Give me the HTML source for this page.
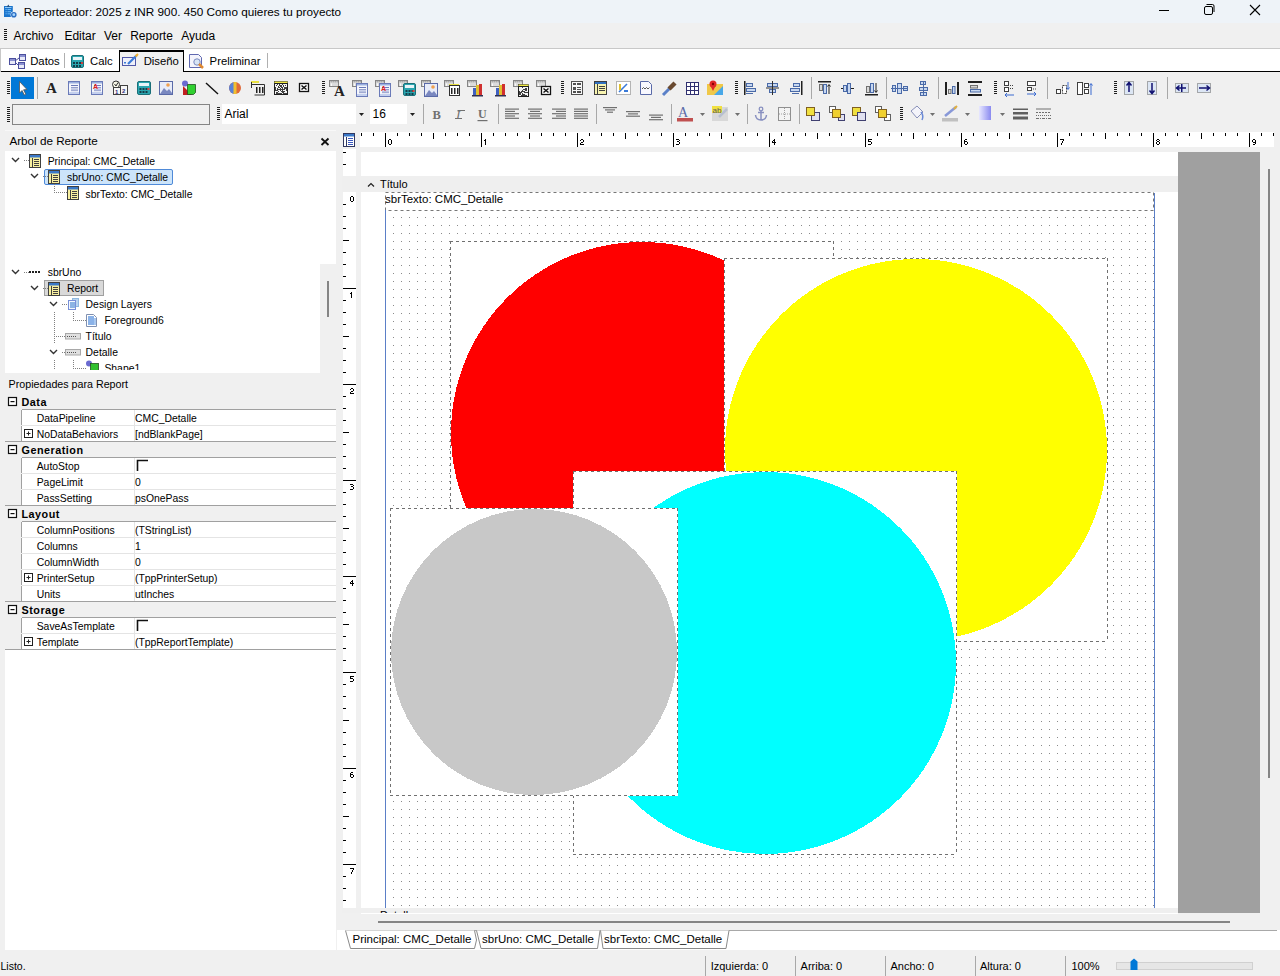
<!DOCTYPE html>
<html><head><meta charset="utf-8"><style>
*{box-sizing:border-box}
html,body{margin:0;padding:0}
body{width:1280px;height:976px;overflow:hidden;position:relative;background:#f0f0f0;font-family:"Liberation Sans",sans-serif;color:#000}
.a{position:absolute}
.t{position:absolute;white-space:nowrap;line-height:1}
svg{position:absolute;overflow:visible}
</style></head><body>

<div class="a" style="left:0px;top:0px;width:1280px;height:23px;background:#eef3f8"></div>
<div class="t" style="left:23.7px;top:5.55px;font-size:11.75px;">Reporteador: 2025 z INR 900. 450 Como quieres tu proyecto</div>
<svg style="left:0;top:0" width="1280" height="23"><line x1="1159" y1="10.5" x2="1169" y2="10.5" stroke="#000" stroke-width="1"/><rect x="1204.5" y="6.5" width="8" height="8" rx="1.5" fill="none" stroke="#000"/><path d="M1206.5 4.5 h6 a1.5 1.5 0 0 1 1.5 1.5 v6" fill="none" stroke="#000"/><path d="M1250 5 L1260 15 M1260 5 L1250 15" stroke="#000" stroke-width="1.1"/><rect x="4" y="6" width="8.8" height="11" fill="#1a74cc"/><path d="M6.8 7 L8.3 4.6 L9.8 7 Z" fill="#24507e"/><rect x="5" y="7" width="6.5" height="1" fill="#8cc8f8"/><rect x="5.5" y="9" width="1.2" height="1" fill="#6ab8f8"/><rect x="7.5" y="9" width="3.5" height="1" fill="#6ab8f8"/><rect x="5.5" y="11.2" width="1.2" height="1" fill="#6ab8f8"/><rect x="7.5" y="11.2" width="3.5" height="1" fill="#6ab8f8"/><rect x="5.5" y="13.3" width="1.2" height="1" fill="#6ab8f8"/><rect x="7.5" y="13.3" width="2.5" height="1" fill="#6ab8f8"/><circle cx="13.8" cy="14.7" r="3.3" fill="#eef3f8"/><circle cx="13.8" cy="14.7" r="2.1" fill="#a8d8ff" stroke="#2a6ec4" stroke-width="1.4"/></svg>
<svg style="left:0;top:0" width="1" height="1"><rect x="4" y="29" width="3" height="1" fill="#1a1a1a"/><rect x="4" y="31" width="3" height="1" fill="#1a1a1a"/><rect x="4" y="33" width="3" height="1" fill="#1a1a1a"/><rect x="4" y="35" width="3" height="1" fill="#1a1a1a"/><rect x="4" y="37" width="3" height="1" fill="#1a1a1a"/><rect x="4" y="39" width="3" height="1" fill="#1a1a1a"/></svg>
<div class="t" style="left:13.4px;top:30.34px;font-size:12px;">Archivo</div>
<div class="t" style="left:64.4px;top:30.34px;font-size:12px;">Editar</div>
<div class="t" style="left:104px;top:30.34px;font-size:12px;">Ver</div>
<div class="t" style="left:130.2px;top:30.34px;font-size:12px;">Reporte</div>
<div class="t" style="left:181.3px;top:30.34px;font-size:12px;">Ayuda</div>
<div class="a" style="left:0px;top:48px;width:1280px;height:1px;background:#c8c8c8"></div>
<div class="a" style="left:0px;top:49px;width:1280px;height:22px;background:#fff"></div>
<div class="a" style="left:0px;top:71px;width:1280px;height:1px;background:#000"></div>
<div class="a" style="left:0px;top:48px;width:1px;height:24px;background:#c8c8c8"></div>
<div class="a" style="left:119px;top:50px;width:65px;height:22px;background:#f0f0f0;border:1px solid #000;border-top-width:2px;border-bottom:none"></div>
<div class="t" style="left:30.2px;top:56.33px;font-size:11.3px;">Datos</div>
<div class="t" style="left:90px;top:56.33px;font-size:11.3px;">Calc</div>
<div class="t" style="left:143.7px;top:56.33px;font-size:11.3px;">Diseño</div>
<div class="t" style="left:209.6px;top:56.33px;font-size:11.3px;">Preliminar</div>
<div class="a" style="left:64px;top:53px;width:1px;height:15px;background:#b0b0b0"></div>
<div class="a" style="left:267px;top:53px;width:1px;height:15px;background:#b0b0b0"></div>
<svg style="left:0;top:0" width="1" height="1"><rect x="9.5" y="58.5" width="6" height="6" fill="#e8eaf8" stroke="#4b4f9e"/><rect x="10" y="59" width="5" height="2" fill="#8a90d0"/><rect x="19.5" y="54.5" width="6" height="6" fill="#e8eaf8" stroke="#4b4f9e"/><rect x="20" y="55" width="5" height="2" fill="#8a90d0"/><rect x="18.5" y="62.5" width="6" height="6" fill="#e8eaf8" stroke="#4b4f9e"/><rect x="19" y="63" width="5" height="2" fill="#8a90d0"/><path d="M15 61 L19 58 M15 62 L18 65" stroke="#4b4f9e" stroke-width="1"/><rect x="71.5" y="55.5" width="12" height="12" rx="1.5" fill="#2aa6b0" stroke="#1a6f78"/><rect x="73" y="57" width="9" height="3" fill="#e8f4f8"/><rect x="73" y="62" width="2" height="2" fill="#163c48"/><rect x="73" y="65" width="2" height="2" fill="#163c48"/><rect x="76" y="62" width="2" height="2" fill="#163c48"/><rect x="76" y="65" width="2" height="2" fill="#163c48"/><rect x="79" y="62" width="2" height="2" fill="#163c48"/><rect x="79" y="65" width="2" height="2" fill="#163c48"/><rect x="81" y="62" width="2" height="2" fill="#d04040"/><rect x="122.5" y="57.5" width="13" height="8" fill="#eef0fa" stroke="#5058a8"/><path d="M128 64 L137 55" stroke="#3a7ad8" stroke-width="2.2"/><path d="M135.5 56.5 L138 54" stroke="#f0b030" stroke-width="2"/><rect x="124" y="62" width="2" height="1.5" fill="#3a7ad8"/><path d="M189.5 54.5 h9 l3 3 v10 h-12 z" fill="#f4f4fc" stroke="#6068b0"/><circle cx="197" cy="62" r="3.2" fill="#d8e4f4" stroke="#7a8ac0"/><path d="M199 64 L203 68" stroke="#e08a30" stroke-width="2.5"/></svg>
<svg style="left:0;top:0" width="1" height="1"><rect x="11" y="77" width="23" height="22" fill="#0078d7"/><path d="M19.5 81.5 L19.5 93 L22 90.5 L24.3 95 L25.8 94.2 L23.6 89.8 L27 89.5 Z" fill="#fff" stroke="#555" stroke-width="0.8"/><rect x="7" y="81" width="3" height="1" fill="#202020"/><rect x="7" y="83" width="3" height="1" fill="#202020"/><rect x="7" y="85" width="3" height="1" fill="#202020"/><rect x="7" y="87" width="3" height="1" fill="#202020"/><rect x="7" y="89" width="3" height="1" fill="#202020"/><rect x="7" y="91" width="3" height="1" fill="#202020"/><rect x="7" y="93" width="3" height="1" fill="#202020"/><rect x="37" y="77" width="1" height="22" fill="#a8a8a8"/><text x="46" y="93" font-family="Liberation Serif" font-weight="bold" font-size="15" fill="#222">A</text><rect x="68.5" y="81.5" width="11" height="13" fill="#f4f6fc" stroke="#6a7ab8"/><rect x="69" y="82" width="10" height="1.5" fill="#9ab0e0"/><rect x="71" y="85.0" width="7" height="1" fill="#6a7ab8"/><rect x="71" y="87.3" width="7" height="1" fill="#6a7ab8"/><rect x="71" y="89.6" width="7" height="1" fill="#6a7ab8"/><rect x="71" y="91.9" width="7" height="1" fill="#6a7ab8"/><rect x="69" y="92" width="10" height="2" fill="#c4d0ee"/><rect x="91.5" y="81.5" width="11" height="13" fill="#f4f6fc" stroke="#6a7ab8"/><rect x="92" y="82" width="10" height="1.5" fill="#9ab0e0"/><rect x="94" y="85.0" width="7" height="1" fill="#6a7ab8"/><rect x="94" y="87.3" width="7" height="1" fill="#6a7ab8"/><rect x="94" y="89.6" width="7" height="1" fill="#6a7ab8"/><rect x="94" y="91.9" width="7" height="1" fill="#6a7ab8"/><text x="93" y="89" font-family="Liberation Sans" font-weight="bold" font-size="7" fill="#e02020">A</text><rect x="92" y="92" width="10" height="2" fill="#c4d0ee"/><circle cx="116" cy="84.5" r="3.5" fill="#f8f8e8" stroke="#303030"/><path d="M114.5 84 L116 86 L118 82.5" stroke="#303030" fill="none"/><rect x="113.5" y="87.5" width="7" height="7" fill="#f6f6f6" stroke="#404040"/><rect x="120.5" y="85.5" width="7" height="9" fill="#f6f6f6" stroke="#404040"/><text x="115" y="94" font-family="Liberation Sans" font-weight="bold" font-size="6" fill="#303080">1</text><text x="122" y="93" font-family="Liberation Sans" font-weight="bold" font-size="6" fill="#303080">2</text><rect x="137.5" y="81.5" width="13" height="13" rx="1.5" fill="#2aa6b0" stroke="#1a6f78"/><rect x="139" y="83" width="10" height="3" fill="#e8f4f8"/><rect x="139.5" y="88" width="2" height="2" fill="#163c48"/><rect x="139.5" y="91" width="2" height="2" fill="#163c48"/><rect x="142.5" y="88" width="2" height="2" fill="#163c48"/><rect x="142.5" y="91" width="2" height="2" fill="#163c48"/><rect x="145.5" y="88" width="2" height="2" fill="#163c48"/><rect x="145.5" y="91" width="2" height="2" fill="#163c48"/><rect x="147.5" y="88" width="2" height="2" fill="#e04040"/><rect x="159.5" y="81.5" width="13" height="13" fill="#e8ecf8" stroke="#5a6aa8"/><path d="M160 94 L164 88 L167 91 L169 89 L172 93 L172 94 Z" fill="#7a88c0"/><circle cx="168" cy="85" r="1.8" fill="#f0a050"/><circle cx="185" cy="83.5" r="3" fill="#6a6ad0"/><path d="M183 86 L183 95 L192 95 Z" fill="#c02020"/><path d="M187.5 84.5 h8 v8 l-2 2 h-6 z" fill="#30d030" stroke="#205020" stroke-width="0.8"/><path d="M206 83 L218 94" stroke="#111" stroke-width="1.4"/><circle cx="235" cy="88" r="6" fill="#e06a3a"/><path d="M235 82 A6 6 0 0 0 235 94 Z" fill="#5a82d8"/><rect x="233.5" y="82" width="3" height="12" fill="#f0c030"/><rect x="251" y="81" width="8" height="2" fill="#e8e040"/><path d="M251.5 82 V88 M252 84.5 H264.5 V95 H254.5" fill="none" stroke="#303030"/><rect x="256" y="87" width="1.5" height="6" fill="#222"/><rect x="259" y="87" width="1.5" height="6" fill="#222"/><rect x="262" y="87" width="1.5" height="6" fill="#222"/><rect x="274.5" y="81.5" width="13" height="2" fill="#f0e840" stroke="#505020" stroke-width="0.6"/><rect x="274.5" y="83.5" width="13" height="11" fill="#404040" stroke="#202020"/><rect x="275" y="84" width="1" height="1" fill="#f4f4f4"/><rect x="276" y="84" width="1" height="1" fill="#f4f4f4"/><rect x="278" y="84" width="1" height="1" fill="#f4f4f4"/><rect x="280" y="84" width="1" height="1" fill="#f4f4f4"/><rect x="281" y="84" width="1" height="1" fill="#f4f4f4"/><rect x="283" y="84" width="1" height="1" fill="#f4f4f4"/><rect x="284" y="84" width="1" height="1" fill="#f4f4f4"/><rect x="285" y="84" width="1" height="1" fill="#f4f4f4"/><rect x="286" y="84" width="1" height="1" fill="#f4f4f4"/><rect x="275" y="85" width="1" height="1" fill="#f4f4f4"/><rect x="277" y="85" width="1" height="1" fill="#f4f4f4"/><rect x="278" y="85" width="1" height="1" fill="#f4f4f4"/><rect x="282" y="85" width="1" height="1" fill="#f4f4f4"/><rect x="284" y="85" width="1" height="1" fill="#f4f4f4"/><rect x="286" y="85" width="1" height="1" fill="#f4f4f4"/><rect x="275" y="86" width="1" height="1" fill="#f4f4f4"/><rect x="276" y="86" width="1" height="1" fill="#f4f4f4"/><rect x="277" y="86" width="1" height="1" fill="#f4f4f4"/><rect x="279" y="86" width="1" height="1" fill="#f4f4f4"/><rect x="282" y="86" width="1" height="1" fill="#f4f4f4"/><rect x="284" y="86" width="1" height="1" fill="#f4f4f4"/><rect x="285" y="86" width="1" height="1" fill="#f4f4f4"/><rect x="286" y="86" width="1" height="1" fill="#f4f4f4"/><rect x="276" y="87" width="1" height="1" fill="#f4f4f4"/><rect x="277" y="87" width="1" height="1" fill="#f4f4f4"/><rect x="280" y="87" width="1" height="1" fill="#f4f4f4"/><rect x="283" y="87" width="1" height="1" fill="#f4f4f4"/><rect x="276" y="88" width="1" height="1" fill="#f4f4f4"/><rect x="278" y="88" width="1" height="1" fill="#f4f4f4"/><rect x="279" y="88" width="1" height="1" fill="#f4f4f4"/><rect x="281" y="88" width="1" height="1" fill="#f4f4f4"/><rect x="283" y="88" width="1" height="1" fill="#f4f4f4"/><rect x="276" y="89" width="1" height="1" fill="#f4f4f4"/><rect x="285" y="89" width="1" height="1" fill="#f4f4f4"/><rect x="278" y="90" width="1" height="1" fill="#f4f4f4"/><rect x="279" y="90" width="1" height="1" fill="#f4f4f4"/><rect x="281" y="90" width="1" height="1" fill="#f4f4f4"/><rect x="283" y="90" width="1" height="1" fill="#f4f4f4"/><rect x="284" y="90" width="1" height="1" fill="#f4f4f4"/><rect x="285" y="90" width="1" height="1" fill="#f4f4f4"/><rect x="275" y="91" width="1" height="1" fill="#f4f4f4"/><rect x="276" y="91" width="1" height="1" fill="#f4f4f4"/><rect x="277" y="91" width="1" height="1" fill="#f4f4f4"/><rect x="279" y="91" width="1" height="1" fill="#f4f4f4"/><rect x="280" y="91" width="1" height="1" fill="#f4f4f4"/><rect x="285" y="91" width="1" height="1" fill="#f4f4f4"/><rect x="286" y="91" width="1" height="1" fill="#f4f4f4"/><rect x="275" y="92" width="1" height="1" fill="#f4f4f4"/><rect x="278" y="92" width="1" height="1" fill="#f4f4f4"/><rect x="279" y="92" width="1" height="1" fill="#f4f4f4"/><rect x="280" y="92" width="1" height="1" fill="#f4f4f4"/><rect x="281" y="92" width="1" height="1" fill="#f4f4f4"/><rect x="284" y="92" width="1" height="1" fill="#f4f4f4"/><rect x="285" y="92" width="1" height="1" fill="#f4f4f4"/><rect x="286" y="92" width="1" height="1" fill="#f4f4f4"/><rect x="275" y="93" width="1" height="1" fill="#f4f4f4"/><rect x="282" y="93" width="1" height="1" fill="#f4f4f4"/><rect x="299.5" y="83.5" width="9" height="8" fill="#fff" stroke="#111" stroke-width="1.3"/><path d="M301.5 85.5 L306.5 89.5 M306.5 85.5 L301.5 89.5" stroke="#111" stroke-width="1.5"/><rect x="322" y="81" width="3" height="1" fill="#202020"/><rect x="322" y="83" width="3" height="1" fill="#202020"/><rect x="322" y="85" width="3" height="1" fill="#202020"/><rect x="322" y="87" width="3" height="1" fill="#202020"/><rect x="322" y="89" width="3" height="1" fill="#202020"/><rect x="322" y="91" width="3" height="1" fill="#202020"/><rect x="322" y="93" width="3" height="1" fill="#202020"/><rect x="329.5" y="80.5" width="9" height="6" fill="#dcdcdc" stroke="#858585"/><rect x="330" y="81" width="8" height="1.5" fill="#f4f4f4"/><rect x="330.5" y="81" width="1.2" height="1.5" fill="#8a8a8a"/><rect x="332.5" y="81" width="1.2" height="1.5" fill="#8a8a8a"/><rect x="334.5" y="81" width="1.2" height="1.5" fill="#8a8a8a"/><rect x="336.5" y="81" width="1.2" height="1.5" fill="#8a8a8a"/><rect x="331" y="83.5" width="1" height="2.5" fill="#fafafa"/><rect x="352.5" y="80.5" width="9" height="6" fill="#dcdcdc" stroke="#858585"/><rect x="353" y="81" width="8" height="1.5" fill="#f4f4f4"/><rect x="353.5" y="81" width="1.2" height="1.5" fill="#8a8a8a"/><rect x="355.5" y="81" width="1.2" height="1.5" fill="#8a8a8a"/><rect x="357.5" y="81" width="1.2" height="1.5" fill="#8a8a8a"/><rect x="359.5" y="81" width="1.2" height="1.5" fill="#8a8a8a"/><rect x="354" y="83.5" width="1" height="2.5" fill="#fafafa"/><rect x="375.5" y="80.5" width="9" height="6" fill="#dcdcdc" stroke="#858585"/><rect x="376" y="81" width="8" height="1.5" fill="#f4f4f4"/><rect x="376.5" y="81" width="1.2" height="1.5" fill="#8a8a8a"/><rect x="378.5" y="81" width="1.2" height="1.5" fill="#8a8a8a"/><rect x="380.5" y="81" width="1.2" height="1.5" fill="#8a8a8a"/><rect x="382.5" y="81" width="1.2" height="1.5" fill="#8a8a8a"/><rect x="377" y="83.5" width="1" height="2.5" fill="#fafafa"/><rect x="398.5" y="80.5" width="9" height="6" fill="#dcdcdc" stroke="#858585"/><rect x="399" y="81" width="8" height="1.5" fill="#f4f4f4"/><rect x="399.5" y="81" width="1.2" height="1.5" fill="#8a8a8a"/><rect x="401.5" y="81" width="1.2" height="1.5" fill="#8a8a8a"/><rect x="403.5" y="81" width="1.2" height="1.5" fill="#8a8a8a"/><rect x="405.5" y="81" width="1.2" height="1.5" fill="#8a8a8a"/><rect x="400" y="83.5" width="1" height="2.5" fill="#fafafa"/><rect x="421.5" y="80.5" width="9" height="6" fill="#dcdcdc" stroke="#858585"/><rect x="422" y="81" width="8" height="1.5" fill="#f4f4f4"/><rect x="422.5" y="81" width="1.2" height="1.5" fill="#8a8a8a"/><rect x="424.5" y="81" width="1.2" height="1.5" fill="#8a8a8a"/><rect x="426.5" y="81" width="1.2" height="1.5" fill="#8a8a8a"/><rect x="428.5" y="81" width="1.2" height="1.5" fill="#8a8a8a"/><rect x="423" y="83.5" width="1" height="2.5" fill="#fafafa"/><rect x="444.5" y="80.5" width="9" height="6" fill="#dcdcdc" stroke="#858585"/><rect x="445" y="81" width="8" height="1.5" fill="#f4f4f4"/><rect x="445.5" y="81" width="1.2" height="1.5" fill="#8a8a8a"/><rect x="447.5" y="81" width="1.2" height="1.5" fill="#8a8a8a"/><rect x="449.5" y="81" width="1.2" height="1.5" fill="#8a8a8a"/><rect x="451.5" y="81" width="1.2" height="1.5" fill="#8a8a8a"/><rect x="446" y="83.5" width="1" height="2.5" fill="#fafafa"/><rect x="467.5" y="80.5" width="9" height="6" fill="#dcdcdc" stroke="#858585"/><rect x="468" y="81" width="8" height="1.5" fill="#f4f4f4"/><rect x="468.5" y="81" width="1.2" height="1.5" fill="#8a8a8a"/><rect x="470.5" y="81" width="1.2" height="1.5" fill="#8a8a8a"/><rect x="472.5" y="81" width="1.2" height="1.5" fill="#8a8a8a"/><rect x="474.5" y="81" width="1.2" height="1.5" fill="#8a8a8a"/><rect x="469" y="83.5" width="1" height="2.5" fill="#fafafa"/><rect x="490.5" y="80.5" width="9" height="6" fill="#dcdcdc" stroke="#858585"/><rect x="491" y="81" width="8" height="1.5" fill="#f4f4f4"/><rect x="491.5" y="81" width="1.2" height="1.5" fill="#8a8a8a"/><rect x="493.5" y="81" width="1.2" height="1.5" fill="#8a8a8a"/><rect x="495.5" y="81" width="1.2" height="1.5" fill="#8a8a8a"/><rect x="497.5" y="81" width="1.2" height="1.5" fill="#8a8a8a"/><rect x="492" y="83.5" width="1" height="2.5" fill="#fafafa"/><rect x="513.5" y="80.5" width="9" height="6" fill="#dcdcdc" stroke="#858585"/><rect x="514" y="81" width="8" height="1.5" fill="#f4f4f4"/><rect x="514.5" y="81" width="1.2" height="1.5" fill="#8a8a8a"/><rect x="516.5" y="81" width="1.2" height="1.5" fill="#8a8a8a"/><rect x="518.5" y="81" width="1.2" height="1.5" fill="#8a8a8a"/><rect x="520.5" y="81" width="1.2" height="1.5" fill="#8a8a8a"/><rect x="515" y="83.5" width="1" height="2.5" fill="#fafafa"/><rect x="536.5" y="80.5" width="9" height="6" fill="#dcdcdc" stroke="#858585"/><rect x="537" y="81" width="8" height="1.5" fill="#f4f4f4"/><rect x="537.5" y="81" width="1.2" height="1.5" fill="#8a8a8a"/><rect x="539.5" y="81" width="1.2" height="1.5" fill="#8a8a8a"/><rect x="541.5" y="81" width="1.2" height="1.5" fill="#8a8a8a"/><rect x="543.5" y="81" width="1.2" height="1.5" fill="#8a8a8a"/><rect x="538" y="83.5" width="1" height="2.5" fill="#fafafa"/><text x="334" y="95.5" font-family="Liberation Serif" font-weight="bold" font-size="15" fill="#222">A</text><rect x="356.5" y="83.5" width="11" height="13" fill="#f4f6fc" stroke="#6a7ab8"/><rect x="357" y="84" width="10" height="1.5" fill="#9ab0e0"/><rect x="359" y="87.0" width="7" height="1" fill="#6a7ab8"/><rect x="359" y="89.3" width="7" height="1" fill="#6a7ab8"/><rect x="359" y="91.6" width="7" height="1" fill="#6a7ab8"/><rect x="359" y="93.9" width="7" height="1" fill="#6a7ab8"/><rect x="357" y="94" width="10" height="2" fill="#c4d0ee"/><rect x="379.5" y="83.5" width="11" height="13" fill="#f4f6fc" stroke="#6a7ab8"/><rect x="380" y="84" width="10" height="1.5" fill="#9ab0e0"/><rect x="382" y="87.0" width="7" height="1" fill="#6a7ab8"/><rect x="382" y="89.3" width="7" height="1" fill="#6a7ab8"/><rect x="382" y="91.6" width="7" height="1" fill="#6a7ab8"/><rect x="382" y="93.9" width="7" height="1" fill="#6a7ab8"/><text x="381" y="91" font-family="Liberation Sans" font-weight="bold" font-size="7" fill="#e02020">A</text><rect x="380" y="94" width="10" height="2" fill="#c4d0ee"/><rect x="403.5" y="83.5" width="12" height="12" rx="1.5" fill="#2aa6b0" stroke="#1a6f78"/><rect x="405" y="85" width="9" height="3" fill="#e8f4f8"/><rect x="405.5" y="90" width="2" height="2" fill="#163c48"/><rect x="405.5" y="93" width="2" height="2" fill="#163c48"/><rect x="408.5" y="90" width="2" height="2" fill="#163c48"/><rect x="408.5" y="93" width="2" height="2" fill="#163c48"/><rect x="411.5" y="90" width="2" height="2" fill="#163c48"/><rect x="411.5" y="93" width="2" height="2" fill="#163c48"/><rect x="412.5" y="90" width="2" height="2" fill="#e04040"/><rect x="424.5" y="83.5" width="13" height="13" fill="#e8ecf8" stroke="#5a6aa8"/><path d="M425 96 L429 90 L432 93 L434 91 L437 95 L437 96 Z" fill="#7a88c0"/><circle cx="433" cy="87" r="1.8" fill="#f0a050"/><rect x="449" y="84" width="10" height="2" fill="#e8e040"/><rect x="449.5" y="85.5" width="10" height="10" fill="#fff" stroke="#303030"/><rect x="451" y="88" width="1.5" height="6" fill="#222"/><rect x="454" y="88" width="1.5" height="6" fill="#222"/><rect x="457" y="88" width="1.5" height="6" fill="#222"/><rect x="473" y="88" width="3" height="8" fill="#4060c0"/><rect x="476" y="85" width="3" height="11" fill="#e0c030"/><rect x="479" y="84" width="3" height="12" fill="#d03030"/><rect x="472" y="95" width="11" height="1.5" fill="#303050"/><rect x="496" y="88" width="3" height="8" fill="#4060c0"/><rect x="499" y="85" width="3" height="11" fill="#e0c030"/><rect x="502" y="84" width="3" height="12" fill="#d03030"/><rect x="495" y="95" width="11" height="1.5" fill="#303050"/><rect x="518.5" y="84.5" width="10" height="2" fill="#f0e840" stroke="#505020" stroke-width="0.6"/><rect x="518.5" y="86.5" width="10" height="10" fill="#404040" stroke="#202020"/><rect x="519" y="87" width="1" height="1" fill="#f4f4f4"/><rect x="520" y="87" width="1" height="1" fill="#f4f4f4"/><rect x="521" y="87" width="1" height="1" fill="#f4f4f4"/><rect x="523" y="87" width="1" height="1" fill="#f4f4f4"/><rect x="524" y="87" width="1" height="1" fill="#f4f4f4"/><rect x="525" y="87" width="1" height="1" fill="#f4f4f4"/><rect x="526" y="87" width="1" height="1" fill="#f4f4f4"/><rect x="527" y="87" width="1" height="1" fill="#f4f4f4"/><rect x="519" y="88" width="1" height="1" fill="#f4f4f4"/><rect x="520" y="88" width="1" height="1" fill="#f4f4f4"/><rect x="521" y="88" width="1" height="1" fill="#f4f4f4"/><rect x="522" y="88" width="1" height="1" fill="#f4f4f4"/><rect x="523" y="88" width="1" height="1" fill="#f4f4f4"/><rect x="524" y="88" width="1" height="1" fill="#f4f4f4"/><rect x="527" y="88" width="1" height="1" fill="#f4f4f4"/><rect x="519" y="89" width="1" height="1" fill="#f4f4f4"/><rect x="520" y="89" width="1" height="1" fill="#f4f4f4"/><rect x="521" y="89" width="1" height="1" fill="#f4f4f4"/><rect x="522" y="89" width="1" height="1" fill="#f4f4f4"/><rect x="527" y="89" width="1" height="1" fill="#f4f4f4"/><rect x="519" y="90" width="1" height="1" fill="#f4f4f4"/><rect x="520" y="90" width="1" height="1" fill="#f4f4f4"/><rect x="521" y="90" width="1" height="1" fill="#f4f4f4"/><rect x="523" y="90" width="1" height="1" fill="#f4f4f4"/><rect x="524" y="90" width="1" height="1" fill="#f4f4f4"/><rect x="527" y="90" width="1" height="1" fill="#f4f4f4"/><rect x="520" y="91" width="1" height="1" fill="#f4f4f4"/><rect x="525" y="91" width="1" height="1" fill="#f4f4f4"/><rect x="526" y="91" width="1" height="1" fill="#f4f4f4"/><rect x="527" y="91" width="1" height="1" fill="#f4f4f4"/><rect x="522" y="92" width="1" height="1" fill="#f4f4f4"/><rect x="523" y="92" width="1" height="1" fill="#f4f4f4"/><rect x="521" y="93" width="1" height="1" fill="#f4f4f4"/><rect x="523" y="93" width="1" height="1" fill="#f4f4f4"/><rect x="524" y="93" width="1" height="1" fill="#f4f4f4"/><rect x="525" y="93" width="1" height="1" fill="#f4f4f4"/><rect x="526" y="93" width="1" height="1" fill="#f4f4f4"/><rect x="527" y="93" width="1" height="1" fill="#f4f4f4"/><rect x="521" y="94" width="1" height="1" fill="#f4f4f4"/><rect x="525" y="94" width="1" height="1" fill="#f4f4f4"/><rect x="526" y="94" width="1" height="1" fill="#f4f4f4"/><rect x="527" y="94" width="1" height="1" fill="#f4f4f4"/><rect x="519" y="95" width="1" height="1" fill="#f4f4f4"/><rect x="520" y="95" width="1" height="1" fill="#f4f4f4"/><rect x="527" y="95" width="1" height="1" fill="#f4f4f4"/><rect x="541.5" y="86.5" width="9" height="8" fill="#fff" stroke="#111" stroke-width="1.3"/><path d="M543.5 88.5 L548.5 92.5 M548.5 88.5 L543.5 92.5" stroke="#111" stroke-width="1.5"/><rect x="561" y="81" width="3" height="1" fill="#202020"/><rect x="561" y="83" width="3" height="1" fill="#202020"/><rect x="561" y="85" width="3" height="1" fill="#202020"/><rect x="561" y="87" width="3" height="1" fill="#202020"/><rect x="561" y="89" width="3" height="1" fill="#202020"/><rect x="561" y="91" width="3" height="1" fill="#202020"/><rect x="561" y="93" width="3" height="1" fill="#202020"/><rect x="571.5" y="81.5" width="11" height="13" fill="#f8f8f8" stroke="#505050"/><rect x="573" y="83" width="3" height="2" fill="#505050"/><rect x="577" y="83" width="4" height="2" fill="#505050"/><rect x="573" y="87" width="3" height="3" fill="#505050"/><rect x="577" y="87" width="4" height="1" fill="#505050"/><rect x="577" y="89" width="4" height="1" fill="#505050"/><rect x="573" y="91" width="3" height="2" fill="#505050"/><rect x="577" y="91" width="4" height="2" fill="#505050"/><rect x="594.5" y="81.5" width="12" height="13" fill="#f8f4b0" stroke="#404040"/><rect x="595" y="82" width="11" height="2" fill="#3070c0"/><rect x="597" y="84" width="1" height="10" fill="#404040"/><rect x="599" y="86" width="6" height="1" fill="#404040"/><rect x="599" y="88" width="6" height="1" fill="#404040"/><rect x="599" y="90" width="6" height="1" fill="#404040"/><rect x="616.5" y="81.5" width="14" height="13" fill="#fff" stroke="#707070" stroke-dasharray="1 1"/><path d="M619 92 L627 84" stroke="#3a7ad8" stroke-width="1.6"/><rect x="619" y="84" width="2" height="6" fill="#e0c030"/><rect x="624" y="90" width="4" height="2" fill="#3a7ad8"/><path d="M640.5 81.5 h8 l3 3 v10 h-11 z" fill="#f8f8ff" stroke="#5a6aa8"/><path d="M642 89 l1.5 -1.5 l1.5 1.5 l1.5 -1.5 l1.5 1.5 l1.5 -1.5" fill="none" stroke="#303030" stroke-width="0.8"/><path d="M663 95 L670 88" stroke="#5a80c8" stroke-width="3"/><path d="M669 89 L675 83" stroke="#6a4a30" stroke-width="4.5"/><rect x="686.5" y="82.5" width="12" height="12" fill="#fff" stroke="#303070"/><path d="M690.5 82.5 V94.5 M694.5 82.5 V94.5 M686.5 86.5 H698.5 M686.5 90.5 H698.5" stroke="#303070"/><rect x="707" y="84" width="16" height="11" fill="#f0c848"/><path d="M714 95 L723 86 V95 Z" fill="#48a8e8"/><circle cx="713" cy="84" r="3.5" fill="#e02828"/><path d="M710 85 L713 91 L716 85 Z" fill="#e02828"/><circle cx="713" cy="84" r="1.2" fill="#800"/><rect x="735" y="81" width="3" height="1" fill="#202020"/><rect x="735" y="83" width="3" height="1" fill="#202020"/><rect x="735" y="85" width="3" height="1" fill="#202020"/><rect x="735" y="87" width="3" height="1" fill="#202020"/><rect x="735" y="89" width="3" height="1" fill="#202020"/><rect x="735" y="91" width="3" height="1" fill="#202020"/><rect x="735" y="93" width="3" height="1" fill="#202020"/><rect x="744" y="81" width="1.5" height="14" fill="#202020"/><rect x="746.5" y="83.5" width="6" height="3" fill="#c8d8f0" stroke="#4a6aa8"/><rect x="746.5" y="88.5" width="9" height="3" fill="#c8d8f0" stroke="#4a6aa8"/><path d="M746 93.5 H753" stroke="#4a6aa8"/><rect x="767.5" y="83.5" width="10" height="3" fill="#c8d8f0" stroke="#4a6aa8"/><rect x="769.5" y="89.5" width="6" height="3" fill="#c8d8f0" stroke="#4a6aa8"/><path d="M766 88 H779" stroke="#303030"/><path d="M772.5 81 V95" stroke="#303030"/><rect x="801" y="81" width="1.5" height="14" fill="#202020"/><rect x="793.5" y="83.5" width="6" height="3" fill="#c8d8f0" stroke="#4a6aa8"/><rect x="790.5" y="88.5" width="9" height="3" fill="#c8d8f0" stroke="#4a6aa8"/><path d="M792 93.5 H799" stroke="#4a6aa8"/><rect x="811" y="77" width="1" height="22" fill="#a8a8a8"/><rect x="818" y="81" width="13" height="1.5" fill="#202020"/><rect x="819.5" y="84.5" width="3" height="6" fill="#d8d8d8" stroke="#707070"/><rect x="823.5" y="84.5" width="3" height="9" fill="#c8d8f0" stroke="#4a6aa8"/><path d="M829 94 V85 M827.5 86.5 L829 84.5 L830.5 86.5" stroke="#202020" fill="none"/><path d="M841 88.5 H854" stroke="#202020"/><rect x="843.5" y="85.5" width="3" height="6" fill="#c8d8f0" stroke="#4a6aa8"/><rect x="847.5" y="83.5" width="3" height="10" fill="#c8d8f0" stroke="#4a6aa8"/><rect x="865" y="94" width="13" height="1.5" fill="#202020"/><rect x="866.5" y="86.5" width="3" height="6" fill="#d8d8d8" stroke="#707070"/><rect x="870.5" y="83.5" width="3" height="9" fill="#c8d8f0" stroke="#4a6aa8"/><path d="M876 83 V92 M874.5 90.5 L876 92.5 L877.5 90.5" stroke="#202020" fill="none"/><rect x="886" y="77" width="1" height="22" fill="#a8a8a8"/><rect x="892.5" y="85.5" width="3" height="6" fill="#c8d8f0" stroke="#4a6aa8"/><rect x="897.5" y="83.5" width="4" height="10" fill="#c8d8f0" stroke="#4a6aa8"/><rect x="903.5" y="86.5" width="4" height="4" fill="#c8d8f0" stroke="#4a6aa8"/><path d="M891 88.5 H908" stroke="#4a6aa8"/><rect x="920.5" y="81.5" width="5" height="3" fill="#c8d8f0" stroke="#4a6aa8"/><rect x="919.5" y="87.5" width="8" height="3" fill="#c8d8f0" stroke="#4a6aa8"/><rect x="920.5" y="92.5" width="6" height="3" fill="#c8d8f0" stroke="#4a6aa8"/><path d="M923.5 81 V96" stroke="#4a6aa8"/><rect x="938" y="77" width="1" height="22" fill="#a8a8a8"/><rect x="945" y="82" width="2" height="13" fill="#202020"/><rect x="957" y="82" width="2" height="13" fill="#202020"/><rect x="948.5" y="89.5" width="2.5" height="4" fill="#d8d8d8" stroke="#707070"/><rect x="952.5" y="86.5" width="2.5" height="7" fill="#c8d8f0" stroke="#4a6aa8"/><rect x="968" y="81" width="14" height="2" fill="#202020"/><rect x="968" y="94" width="14" height="2" fill="#202020"/><rect x="970.5" y="85.5" width="7" height="2.5" fill="#d8d8d8" stroke="#707070"/><rect x="970.5" y="89.5" width="10" height="2.5" fill="#c8d8f0" stroke="#4a6aa8"/><rect x="994" y="81" width="3" height="1" fill="#202020"/><rect x="994" y="83" width="3" height="1" fill="#202020"/><rect x="994" y="85" width="3" height="1" fill="#202020"/><rect x="994" y="87" width="3" height="1" fill="#202020"/><rect x="994" y="89" width="3" height="1" fill="#202020"/><rect x="994" y="91" width="3" height="1" fill="#202020"/><rect x="994" y="93" width="3" height="1" fill="#202020"/><rect x="1004.5" y="81.5" width="4" height="4" fill="#fff" stroke="#404040"/><rect x="1004.5" y="87.5" width="4" height="4" fill="#fff" stroke="#404040"/><path d="M1010 88.5 H1014 M1010 85.5 H1014" stroke="#404040" stroke-dasharray="1 1"/><path d="M1005 95 H1014 M1007 93 L1005 95 L1007 97" stroke="#3a6ad0" fill="none"/><rect x="1027.5" y="81.5" width="8" height="4" fill="#fff" stroke="#404040"/><rect x="1027.5" y="87.5" width="4" height="3" fill="#fff" stroke="#404040"/><path d="M1033 89 H1036" stroke="#404040" stroke-dasharray="1 1"/><path d="M1027 94 H1036 M1034 92 L1036 94 L1034 96" stroke="#3a6ad0" fill="none"/><rect x="1047" y="77" width="1" height="22" fill="#a8a8a8"/><rect x="1056.5" y="89.5" width="4" height="4" fill="#fff" stroke="#404040"/><rect x="1062.5" y="85.5" width="4" height="8" fill="#fff" stroke="#404040" stroke-dasharray="2 1"/><path d="M1068 82 V89 M1066.5 87.5 L1068 89.5 L1069.5 87.5" stroke="#3a6ad0" fill="none"/><rect x="1077.5" y="82.5" width="5" height="12" fill="#fff" stroke="#404040"/><rect x="1084.5" y="83.5" width="4" height="4" fill="#fff" stroke="#404040"/><rect x="1084.5" y="89.5" width="4" height="4" fill="#fff" stroke="#404040"/><path d="M1091 95 V84 M1089.5 85.5 L1091 83.5 L1092.5 85.5" stroke="#3a6ad0" fill="none"/><rect x="1114" y="81" width="3" height="1" fill="#202020"/><rect x="1114" y="83" width="3" height="1" fill="#202020"/><rect x="1114" y="85" width="3" height="1" fill="#202020"/><rect x="1114" y="87" width="3" height="1" fill="#202020"/><rect x="1114" y="89" width="3" height="1" fill="#202020"/><rect x="1114" y="91" width="3" height="1" fill="#202020"/><rect x="1114" y="93" width="3" height="1" fill="#202020"/><rect x="1124.5" y="81.5" width="9" height="13" fill="#dce6f4" stroke="#606060" stroke-dasharray="1 1"/><path d="M1129 92 V83 M1126.5 85.5 L1129 82.5 L1131.5 85.5" stroke="#101070" stroke-width="1.5" fill="none"/><rect x="1147.5" y="81.5" width="9" height="13" fill="#dce6f4" stroke="#606060" stroke-dasharray="1 1"/><path d="M1152 83 V93 M1149.5 90.5 L1152 93.5 L1154.5 90.5" stroke="#101070" stroke-width="1.5" fill="none"/><rect x="1167" y="77" width="1" height="22" fill="#a8a8a8"/><rect x="1175.5" y="83.5" width="13" height="9" fill="#dce6f4" stroke="#606060" stroke-dasharray="1 1"/><path d="M1186 88 H1177 M1179.5 85.5 L1176.5 88 L1179.5 90.5" stroke="#101070" stroke-width="1.5" fill="none"/><rect x="1181" y="84" width="1.5" height="8" fill="#101070"/><rect x="1197.5" y="83.5" width="13" height="9" fill="#dce6f4" stroke="#606060" stroke-dasharray="1 1"/><path d="M1199 88 H1209 M1206.5 85.5 L1209.5 88 L1206.5 90.5" stroke="#101070" stroke-width="1.5" fill="none"/></svg>
<div class="a" style="left:12px;top:104px;width:198px;height:21px;background:#f0f0f0;border:1px solid #858585"></div>
<div class="a" style="left:222px;top:104px;width:145px;height:20px;background:#fff"></div>
<div class="a" style="left:356px;top:104px;width:11px;height:20px;background:#f0f0f0"></div>
<div class="a" style="left:370px;top:104px;width:49px;height:20px;background:#fff"></div>
<div class="a" style="left:407px;top:104px;width:12px;height:20px;background:#f0f0f0"></div>
<div class="t" style="left:224.4px;top:107.64px;font-size:12px;">Arial</div>
<div class="t" style="left:372.6px;top:107.64px;font-size:12px;">16</div>
<svg style="left:0;top:0" width="1" height="1"><defs><linearGradient id="gr" x1="0" x2="1"><stop offset="0" stop-color="#e8e8ff"/><stop offset="1" stop-color="#8a8af0"/></linearGradient></defs><rect x="7" y="107" width="3" height="1" fill="#202020"/><rect x="7" y="109" width="3" height="1" fill="#202020"/><rect x="7" y="111" width="3" height="1" fill="#202020"/><rect x="7" y="113" width="3" height="1" fill="#202020"/><rect x="7" y="115" width="3" height="1" fill="#202020"/><rect x="7" y="117" width="3" height="1" fill="#202020"/><rect x="7" y="119" width="3" height="1" fill="#202020"/><rect x="7" y="121" width="3" height="1" fill="#202020"/><rect x="217" y="107" width="3" height="1" fill="#202020"/><rect x="217" y="109" width="3" height="1" fill="#202020"/><rect x="217" y="111" width="3" height="1" fill="#202020"/><rect x="217" y="113" width="3" height="1" fill="#202020"/><rect x="217" y="115" width="3" height="1" fill="#202020"/><rect x="217" y="117" width="3" height="1" fill="#202020"/><rect x="217" y="119" width="3" height="1" fill="#202020"/><path d="M359 113 h5 l-2.5 3 z" fill="#202020"/><path d="M410 113 h5 l-2.5 3 z" fill="#202020"/><rect x="423" y="104" width="1" height="20" fill="#a8a8a8"/><text x="432.5" y="119" font-family="Liberation Serif" font-weight="bold" font-size="12.5" fill="#707070">B</text><text x="456" y="119" font-family="Liberation Serif" font-style="italic" font-size="13" fill="#707070">I</text><path d="M457.5 110.5 H465 M455 118.5 H462" stroke="#707070"/><text x="478" y="118" font-family="Liberation Serif" font-weight="bold" font-size="12" fill="#707070">U</text><rect x="477.5" y="120" width="10" height="1.2" fill="#707070"/><rect x="498" y="104" width="1" height="20" fill="#a8a8a8"/><rect x="505" y="108.5" width="14" height="1.2" fill="#707070"/><rect x="505" y="110.8" width="10" height="1.2" fill="#707070"/><rect x="505" y="113.1" width="14" height="1.2" fill="#707070"/><rect x="505" y="115.4" width="10" height="1.2" fill="#707070"/><rect x="505" y="117.7" width="14" height="1.2" fill="#707070"/><rect x="528" y="108.5" width="14" height="1.2" fill="#707070"/><rect x="530" y="110.8" width="10" height="1.2" fill="#707070"/><rect x="528" y="113.1" width="14" height="1.2" fill="#707070"/><rect x="530" y="115.4" width="10" height="1.2" fill="#707070"/><rect x="528" y="117.7" width="14" height="1.2" fill="#707070"/><rect x="552" y="108.5" width="14" height="1.2" fill="#707070"/><rect x="556" y="110.8" width="10" height="1.2" fill="#707070"/><rect x="552" y="113.1" width="14" height="1.2" fill="#707070"/><rect x="556" y="115.4" width="10" height="1.2" fill="#707070"/><rect x="552" y="117.7" width="14" height="1.2" fill="#707070"/><rect x="574" y="108.5" width="14" height="1.2" fill="#707070"/><rect x="574" y="110.8" width="14" height="1.2" fill="#707070"/><rect x="574" y="113.1" width="14" height="1.2" fill="#707070"/><rect x="574" y="115.4" width="14" height="1.2" fill="#707070"/><rect x="574" y="117.7" width="14" height="1.2" fill="#707070"/><rect x="596" y="104" width="1" height="20" fill="#a8a8a8"/><rect x="603" y="107.0" width="14" height="1.2" fill="#707070"/><rect x="605" y="109.3" width="10" height="1.2" fill="#707070"/><rect x="607" y="111.6" width="6" height="1.2" fill="#707070"/><rect x="626" y="111.0" width="14" height="1.2" fill="#707070"/><rect x="628" y="113.3" width="10" height="1.2" fill="#707070"/><rect x="626" y="115.6" width="14" height="1.2" fill="#707070"/><rect x="649" y="114.5" width="14" height="1.2" fill="#707070"/><rect x="651" y="116.8" width="10" height="1.2" fill="#707070"/><rect x="649" y="119.1" width="14" height="1.2" fill="#707070"/><rect x="671" y="104" width="1" height="20" fill="#a8a8a8"/><text x="678" y="117" font-family="Liberation Serif" font-size="14" fill="#5a6aa8">A</text><rect x="677" y="118" width="16" height="3.5" fill="#c05050"/><path d="M700 113 h5 l-2.5 3 z" fill="#707070"/><rect x="712" y="107" width="16" height="14" fill="#d8d8d8"/><rect x="712" y="106" width="10" height="7" fill="#f0e040"/><text x="712.5" y="113" font-family="Liberation Sans" font-size="8" fill="#5a5a5a">ab</text><path d="M719 117 L727 109" stroke="#b8c0d0" stroke-width="2.5"/><path d="M735 113 h5 l-2.5 3 z" fill="#707070"/><rect x="747" y="104" width="1" height="20" fill="#a8a8a8"/><circle cx="761" cy="109" r="1.8" fill="none" stroke="#8890c0" stroke-width="1.3"/><path d="M761 111 V120 M758 112.5 H764 M755.5 115 Q756 120 761 120 Q766 120 766.5 115" fill="none" stroke="#8890c0" stroke-width="1.5"/><rect x="778.5" y="107.5" width="12" height="13" fill="#f4f4f4" stroke="#909090"/><path d="M784.5 108 V120 M779 114 H790" stroke="#a0a0a0" stroke-dasharray="1 1"/><rect x="799" y="104" width="1" height="20" fill="#a8a8a8"/><rect x="811.5" y="112.5" width="8" height="8" fill="#e0e0f0" stroke="#404070"/><rect x="806.5" y="107.5" width="8" height="8" fill="#f0e040" stroke="#806020"/><rect x="829.5" y="106.5" width="6" height="6" fill="#fff" stroke="#606060"/><rect x="838.5" y="114.5" width="6" height="6" fill="#e0e0f0" stroke="#404070"/><rect x="832.5" y="109.5" width="8" height="8" fill="#f0d030" stroke="#806020"/><rect x="852.5" y="107.5" width="8" height="8" fill="#f0e040" stroke="#806020"/><rect x="857.5" y="112.5" width="8" height="8" fill="#e0e0f0" stroke="#404070"/><rect x="875.5" y="106.5" width="6" height="6" fill="#fff" stroke="#606060"/><rect x="884.5" y="114.5" width="6" height="6" fill="#fff" stroke="#606060"/><rect x="878.5" y="109.5" width="8" height="8" fill="#f0d030" stroke="#806020"/><rect x="900" y="107" width="3" height="1" fill="#202020"/><rect x="900" y="109" width="3" height="1" fill="#202020"/><rect x="900" y="111" width="3" height="1" fill="#202020"/><rect x="900" y="113" width="3" height="1" fill="#202020"/><rect x="900" y="115" width="3" height="1" fill="#202020"/><rect x="900" y="117" width="3" height="1" fill="#202020"/><rect x="900" y="119" width="3" height="1" fill="#202020"/><path d="M911 111 L917 106 L923 112 L917 118 Z" fill="#f4f4fa" stroke="#8890b8"/><path d="M921 112 Q924 116 922 120" stroke="#6a8ad8" stroke-width="1.5" fill="none"/><path d="M930 113 h5 l-2.5 3 z" fill="#707070"/><rect x="942" y="118" width="16" height="3.5" fill="#c0c0c0"/><path d="M945 116 L956 107" stroke="#8898d8" stroke-width="2.5"/><path d="M954 109 L957 106" stroke="#e0b040" stroke-width="2"/><path d="M965 113 h5 l-2.5 3 z" fill="#707070"/><rect x="979" y="106" width="12" height="14" fill="url(#gr)"/><path d="M1000 113 h5 l-2.5 3 z" fill="#707070"/><rect x="1013" y="108.5" width="15" height="1.5" fill="#606060"/><rect x="1013" y="112" width="15" height="2.5" fill="#606060"/><rect x="1013" y="116.5" width="15" height="3" fill="#606060"/><path d="M1036 109 H1051" stroke="#707070"/><path d="M1036 112.5 H1051" stroke="#707070" stroke-dasharray="2 1"/><path d="M1036 115.5 H1051" stroke="#707070" stroke-dasharray="1 1"/><path d="M1036 118.5 H1051" stroke="#707070" stroke-dasharray="3 1 1 1"/></svg>
<div class="a" style="left:5px;top:130px;width:331px;height:21px;background:#f0f0f0"></div>
<div class="a" style="left:5px;top:130px;width:331px;height:1px;background:#f8f8f8"></div>
<div class="t" style="left:9.4px;top:135.10px;font-size:11.7px;">Arbol de Reporte</div>
<div class="a" style="left:5px;top:151px;width:331px;height:222px;background:#fff"></div>
<div class="a" style="left:44px;top:169px;width:129px;height:16px;background:#cce4fa;border:1px solid #4f8ad8;border-radius:2px"></div>
<div class="a" style="left:44px;top:280px;width:60px;height:16px;background:#d9d9d9;border:1px solid #a0a0a0"></div>
<div class="t" style="left:47.7px;top:156.60px;font-size:10.4px;">Principal: CMC_Detalle</div>
<div class="t" style="left:67px;top:172.60px;font-size:10.4px;">sbrUno: CMC_Detalle</div>
<div class="t" style="left:85.6px;top:189.60px;font-size:10.4px;">sbrTexto: CMC_Detalle</div>
<div class="t" style="left:47.7px;top:267.60px;font-size:10.4px;">sbrUno</div>
<div class="t" style="left:67px;top:283.60px;font-size:10.4px;">Report</div>
<div class="t" style="left:85.6px;top:299.60px;font-size:10.4px;">Design Layers</div>
<div class="t" style="left:104.4px;top:315.60px;font-size:10.4px;">Foreground6</div>
<div class="t" style="left:85.6px;top:331.60px;font-size:10.4px;">Título</div>
<div class="t" style="left:85.6px;top:347.60px;font-size:10.4px;">Detalle</div>
<svg style="left:0;top:0" width="1" height="1"><path d="M321.5 138.5 L328.5 145 M328.5 138.5 L321.5 145" stroke="#111" stroke-width="1.8"/><path d="M12 158 L15.5 161.5 L19 158" fill="none" stroke="#333" stroke-width="1.4"/><rect x="24" y="160" width="1" height="1" fill="#808080"/><rect x="26" y="160" width="1" height="1" fill="#808080"/><rect x="28" y="160" width="1" height="1" fill="#808080"/><rect x="29.5" y="154.5" width="11" height="13" fill="#f8f0a0" stroke="#404040"/><rect x="30" y="155" width="10" height="2.5" fill="#3a78c8"/><rect x="32" y="158" width="1" height="9" fill="#404040"/><rect x="34" y="159" width="5" height="1" fill="#404040"/><rect x="34" y="161" width="5" height="1" fill="#404040"/><rect x="34" y="163" width="5" height="1" fill="#404040"/><rect x="34" y="165" width="5" height="1" fill="#404040"/><path d="M31 174 L34.5 177.5 L38 174" fill="none" stroke="#333" stroke-width="1.4"/><rect x="43" y="176" width="1" height="1" fill="#808080"/><rect x="45" y="176" width="1" height="1" fill="#808080"/><rect x="47" y="176" width="1" height="1" fill="#808080"/><rect x="48.5" y="170.5" width="11" height="13" fill="#f8f0a0" stroke="#404040"/><rect x="49" y="171" width="10" height="2.5" fill="#3a78c8"/><rect x="51" y="174" width="1" height="9" fill="#404040"/><rect x="53" y="175" width="5" height="1" fill="#404040"/><rect x="53" y="177" width="5" height="1" fill="#404040"/><rect x="53" y="179" width="5" height="1" fill="#404040"/><rect x="53" y="181" width="5" height="1" fill="#404040"/><rect x="54" y="184" width="1" height="1" fill="#808080"/><rect x="54" y="186" width="1" height="1" fill="#808080"/><rect x="54" y="188" width="1" height="1" fill="#808080"/><rect x="54" y="190" width="1" height="1" fill="#808080"/><rect x="54" y="192" width="1" height="1" fill="#808080"/><rect x="56" y="192" width="1" height="1" fill="#808080"/><rect x="58" y="192" width="1" height="1" fill="#808080"/><rect x="60" y="192" width="1" height="1" fill="#808080"/><rect x="62" y="192" width="1" height="1" fill="#808080"/><rect x="64" y="192" width="1" height="1" fill="#808080"/><rect x="66" y="192" width="1" height="1" fill="#808080"/><rect x="67.5" y="186.5" width="11" height="13" fill="#f8f0a0" stroke="#404040"/><rect x="68" y="187" width="10" height="2.5" fill="#3a78c8"/><rect x="70" y="190" width="1" height="9" fill="#404040"/><rect x="72" y="191" width="5" height="1" fill="#404040"/><rect x="72" y="193" width="5" height="1" fill="#404040"/><rect x="72" y="195" width="5" height="1" fill="#404040"/><rect x="72" y="197" width="5" height="1" fill="#404040"/><path d="M12 270 L15.5 273.5 L19 270" fill="none" stroke="#333" stroke-width="1.4"/><rect x="24" y="272" width="1" height="1" fill="#808080"/><rect x="26" y="272" width="1" height="1" fill="#808080"/><rect x="28" y="272" width="1" height="1" fill="#808080"/><rect x="29" y="271" width="11" height="2" fill="#202020"/><rect x="31" y="271" width="1" height="2" fill="#fff"/><rect x="34" y="271" width="1" height="2" fill="#fff"/><rect x="37" y="271" width="1" height="2" fill="#fff"/><path d="M31 286 L34.5 289.5 L38 286" fill="none" stroke="#333" stroke-width="1.4"/><rect x="43" y="288" width="1" height="1" fill="#808080"/><rect x="45" y="288" width="1" height="1" fill="#808080"/><rect x="47" y="288" width="1" height="1" fill="#808080"/><rect x="48.5" y="282.5" width="11" height="13" fill="#f8f0a0" stroke="#404040"/><rect x="49" y="283" width="10" height="2.5" fill="#3a78c8"/><rect x="51" y="286" width="1" height="9" fill="#404040"/><rect x="53" y="287" width="5" height="1" fill="#404040"/><rect x="53" y="289" width="5" height="1" fill="#404040"/><rect x="53" y="291" width="5" height="1" fill="#404040"/><rect x="53" y="293" width="5" height="1" fill="#404040"/><path d="M50 302 L53.5 305.5 L57 302" fill="none" stroke="#333" stroke-width="1.4"/><rect x="62" y="304" width="1" height="1" fill="#808080"/><rect x="64" y="304" width="1" height="1" fill="#808080"/><rect x="66" y="304" width="1" height="1" fill="#808080"/><rect x="72.5" y="298.5" width="6" height="8" fill="#b8d4f0" stroke="#90b8e0"/><rect x="68.5" y="300.5" width="7" height="9" fill="#f4f8ff" stroke="#7890d8"/><rect x="70" y="302" width="5" height="6" fill="#8cb4e4"/><rect x="73" y="312" width="1" height="1" fill="#808080"/><rect x="73" y="314" width="1" height="1" fill="#808080"/><rect x="73" y="316" width="1" height="1" fill="#808080"/><rect x="73" y="318" width="1" height="1" fill="#808080"/><rect x="73" y="320" width="1" height="1" fill="#808080"/><rect x="75" y="320" width="1" height="1" fill="#808080"/><rect x="77" y="320" width="1" height="1" fill="#808080"/><rect x="79" y="320" width="1" height="1" fill="#808080"/><rect x="81" y="320" width="1" height="1" fill="#808080"/><rect x="83" y="320" width="1" height="1" fill="#808080"/><rect x="85" y="320" width="1" height="1" fill="#808080"/><path d="M86.5 314.5 h7 l3 3 v9 h-10 z" fill="#fff" stroke="#8090b0"/><rect x="88" y="316" width="6" height="9" fill="#8ab2e8"/><rect x="94" y="318" width="2" height="7" fill="#a8c8f0"/><rect x="54" y="312" width="1" height="1" fill="#808080"/><rect x="54" y="314" width="1" height="1" fill="#808080"/><rect x="54" y="316" width="1" height="1" fill="#808080"/><rect x="54" y="318" width="1" height="1" fill="#808080"/><rect x="54" y="320" width="1" height="1" fill="#808080"/><rect x="54" y="322" width="1" height="1" fill="#808080"/><rect x="54" y="324" width="1" height="1" fill="#808080"/><rect x="54" y="326" width="1" height="1" fill="#808080"/><rect x="54" y="328" width="1" height="1" fill="#808080"/><rect x="54" y="330" width="1" height="1" fill="#808080"/><rect x="54" y="332" width="1" height="1" fill="#808080"/><rect x="54" y="334" width="1" height="1" fill="#808080"/><rect x="54" y="336" width="1" height="1" fill="#808080"/><rect x="54" y="338" width="1" height="1" fill="#808080"/><rect x="54" y="340" width="1" height="1" fill="#808080"/><rect x="54" y="342" width="1" height="1" fill="#808080"/><rect x="54" y="360" width="1" height="1" fill="#808080"/><rect x="54" y="362" width="1" height="1" fill="#808080"/><rect x="54" y="364" width="1" height="1" fill="#808080"/><rect x="54" y="366" width="1" height="1" fill="#808080"/><rect x="54" y="368" width="1" height="1" fill="#808080"/><rect x="54" y="336" width="1" height="1" fill="#808080"/><rect x="56" y="336" width="1" height="1" fill="#808080"/><rect x="58" y="336" width="1" height="1" fill="#808080"/><rect x="60" y="336" width="1" height="1" fill="#808080"/><rect x="62" y="336" width="1" height="1" fill="#808080"/><rect x="64" y="336" width="1" height="1" fill="#808080"/><rect x="65.5" y="333.5" width="15" height="5.5" fill="#e0e0e0" stroke="#a8a8a8"/><rect x="67" y="336" width="1" height="1" fill="#505050"/><rect x="69" y="336" width="1" height="1" fill="#505050"/><rect x="71" y="336" width="1" height="1" fill="#505050"/><rect x="73" y="336" width="1" height="1" fill="#505050"/><rect x="75" y="336" width="1" height="1" fill="#505050"/><path d="M50 350 L53.5 353.5 L57 350" fill="none" stroke="#333" stroke-width="1.4"/><rect x="62" y="352" width="1" height="1" fill="#808080"/><rect x="64" y="352" width="1" height="1" fill="#808080"/><rect x="65.5" y="349.5" width="15" height="5.5" fill="#e0e0e0" stroke="#a8a8a8"/><rect x="67" y="352" width="1" height="1" fill="#505050"/><rect x="69" y="352" width="1" height="1" fill="#505050"/><rect x="71" y="352" width="1" height="1" fill="#505050"/><rect x="73" y="352" width="1" height="1" fill="#505050"/><rect x="75" y="352" width="1" height="1" fill="#505050"/><rect x="73" y="360" width="1" height="1" fill="#808080"/><rect x="73" y="362" width="1" height="1" fill="#808080"/><rect x="73" y="364" width="1" height="1" fill="#808080"/><rect x="73" y="366" width="1" height="1" fill="#808080"/><rect x="73" y="368" width="1" height="1" fill="#808080"/><rect x="73" y="368" width="1" height="1" fill="#808080"/><rect x="75" y="368" width="1" height="1" fill="#808080"/><rect x="77" y="368" width="1" height="1" fill="#808080"/><rect x="79" y="368" width="1" height="1" fill="#808080"/><rect x="81" y="368" width="1" height="1" fill="#808080"/><rect x="83" y="368" width="1" height="1" fill="#808080"/><rect x="85" y="368" width="1" height="1" fill="#808080"/></svg>
<div class="a" style="left:5px;top:358px;width:315px;height:12px;overflow:hidden"><svg style="left:-5px;top:-358px" width="1" height="1"><circle cx="89" cy="363.5" r="3" fill="#6a6ad0"/><rect x="90.5" y="363.5" width="8" height="8" fill="#30c030" stroke="#205020" stroke-width="0.8"/></svg><div class="t" style="left:99.4px;top:5.6px;font-size:10.4px">Shape1</div></div>
<div class="a" style="left:320px;top:264px;width:16px;height:109px;background:#f0f0f0"></div>
<div class="a" style="left:327px;top:281px;width:2px;height:36px;background:#858585"></div>
<svg style="left:0;top:0" width="1" height="1"></svg>
<div class="a" style="left:5px;top:373px;width:331px;height:20px;background:#f0f0f0"></div>
<div class="t" style="left:8.6px;top:378.94px;font-size:10.7px;">Propiedades para Report</div>
<div class="a" style="left:5px;top:393px;width:331px;height:257px;background:#f0f0f0"></div>
<div class="t" style="left:21.5px;top:397.46px;font-size:10.8px;font-weight:bold;letter-spacing:0.5px">Data</div>
<div class="a" style="left:22px;top:409px;width:314px;height:1px;background:#a0a0a0"></div>
<div class="a" style="left:22px;top:410px;width:314px;height:15px;background:#fff"></div>
<div class="a" style="left:21px;top:410px;width:1px;height:15px;background:#a0a0a0"></div>
<div class="a" style="left:22px;top:425px;width:314px;height:1px;background:#e4e4e4"></div>
<div class="a" style="left:134px;top:410px;width:1px;height:15px;background:#e4e4e4"></div>
<div class="t" style="left:36.7px;top:413.70px;font-size:10.4px;">DataPipeline</div>
<div class="t" style="left:135px;top:413.70px;font-size:10.4px;">CMC_Detalle</div>
<div class="a" style="left:22px;top:426px;width:314px;height:15px;background:#fff"></div>
<div class="a" style="left:21px;top:426px;width:1px;height:15px;background:#a0a0a0"></div>
<div class="a" style="left:5px;top:441px;width:331px;height:1px;background:#a0a0a0"></div>
<div class="a" style="left:134px;top:426px;width:1px;height:15px;background:#e4e4e4"></div>
<div class="t" style="left:36.7px;top:429.70px;font-size:10.4px;">NoDataBehaviors</div>
<div class="t" style="left:135px;top:429.70px;font-size:10.4px;">[ndBlankPage]</div>
<div class="t" style="left:21.5px;top:445.46px;font-size:10.8px;font-weight:bold;letter-spacing:0.5px">Generation</div>
<div class="a" style="left:22px;top:457px;width:314px;height:1px;background:#a0a0a0"></div>
<div class="a" style="left:22px;top:458px;width:314px;height:15px;background:#fff"></div>
<div class="a" style="left:21px;top:458px;width:1px;height:15px;background:#a0a0a0"></div>
<div class="a" style="left:22px;top:473px;width:314px;height:1px;background:#e4e4e4"></div>
<div class="a" style="left:134px;top:458px;width:1px;height:15px;background:#e4e4e4"></div>
<div class="t" style="left:36.7px;top:461.70px;font-size:10.4px;">AutoStop</div>
<div class="a" style="left:22px;top:474px;width:314px;height:15px;background:#fff"></div>
<div class="a" style="left:21px;top:474px;width:1px;height:15px;background:#a0a0a0"></div>
<div class="a" style="left:22px;top:489px;width:314px;height:1px;background:#e4e4e4"></div>
<div class="a" style="left:134px;top:474px;width:1px;height:15px;background:#e4e4e4"></div>
<div class="t" style="left:36.7px;top:477.70px;font-size:10.4px;">PageLimit</div>
<div class="t" style="left:135px;top:477.70px;font-size:10.4px;">0</div>
<div class="a" style="left:22px;top:490px;width:314px;height:15px;background:#fff"></div>
<div class="a" style="left:21px;top:490px;width:1px;height:15px;background:#a0a0a0"></div>
<div class="a" style="left:5px;top:505px;width:331px;height:1px;background:#a0a0a0"></div>
<div class="a" style="left:134px;top:490px;width:1px;height:15px;background:#e4e4e4"></div>
<div class="t" style="left:36.7px;top:493.70px;font-size:10.4px;">PassSetting</div>
<div class="t" style="left:135px;top:493.70px;font-size:10.4px;">psOnePass</div>
<div class="t" style="left:21.5px;top:509.46px;font-size:10.8px;font-weight:bold;letter-spacing:0.5px">Layout</div>
<div class="a" style="left:22px;top:521px;width:314px;height:1px;background:#a0a0a0"></div>
<div class="a" style="left:22px;top:522px;width:314px;height:15px;background:#fff"></div>
<div class="a" style="left:21px;top:522px;width:1px;height:15px;background:#a0a0a0"></div>
<div class="a" style="left:22px;top:537px;width:314px;height:1px;background:#e4e4e4"></div>
<div class="a" style="left:134px;top:522px;width:1px;height:15px;background:#e4e4e4"></div>
<div class="t" style="left:36.7px;top:525.70px;font-size:10.4px;">ColumnPositions</div>
<div class="t" style="left:135px;top:525.70px;font-size:10.4px;">(TStringList)</div>
<div class="a" style="left:22px;top:538px;width:314px;height:15px;background:#fff"></div>
<div class="a" style="left:21px;top:538px;width:1px;height:15px;background:#a0a0a0"></div>
<div class="a" style="left:22px;top:553px;width:314px;height:1px;background:#e4e4e4"></div>
<div class="a" style="left:134px;top:538px;width:1px;height:15px;background:#e4e4e4"></div>
<div class="t" style="left:36.7px;top:541.70px;font-size:10.4px;">Columns</div>
<div class="t" style="left:135px;top:541.70px;font-size:10.4px;">1</div>
<div class="a" style="left:22px;top:554px;width:314px;height:15px;background:#fff"></div>
<div class="a" style="left:21px;top:554px;width:1px;height:15px;background:#a0a0a0"></div>
<div class="a" style="left:22px;top:569px;width:314px;height:1px;background:#e4e4e4"></div>
<div class="a" style="left:134px;top:554px;width:1px;height:15px;background:#e4e4e4"></div>
<div class="t" style="left:36.7px;top:557.70px;font-size:10.4px;">ColumnWidth</div>
<div class="t" style="left:135px;top:557.70px;font-size:10.4px;">0</div>
<div class="a" style="left:22px;top:570px;width:314px;height:15px;background:#fff"></div>
<div class="a" style="left:21px;top:570px;width:1px;height:15px;background:#a0a0a0"></div>
<div class="a" style="left:22px;top:585px;width:314px;height:1px;background:#e4e4e4"></div>
<div class="a" style="left:134px;top:570px;width:1px;height:15px;background:#e4e4e4"></div>
<div class="t" style="left:36.7px;top:573.70px;font-size:10.4px;">PrinterSetup</div>
<div class="t" style="left:135px;top:573.70px;font-size:10.4px;">(TppPrinterSetup)</div>
<div class="a" style="left:22px;top:586px;width:314px;height:15px;background:#fff"></div>
<div class="a" style="left:21px;top:586px;width:1px;height:15px;background:#a0a0a0"></div>
<div class="a" style="left:5px;top:601px;width:331px;height:1px;background:#a0a0a0"></div>
<div class="a" style="left:134px;top:586px;width:1px;height:15px;background:#e4e4e4"></div>
<div class="t" style="left:36.7px;top:589.70px;font-size:10.4px;">Units</div>
<div class="t" style="left:135px;top:589.70px;font-size:10.4px;">utInches</div>
<div class="t" style="left:21.5px;top:605.46px;font-size:10.8px;font-weight:bold;letter-spacing:0.5px">Storage</div>
<div class="a" style="left:22px;top:617px;width:314px;height:1px;background:#a0a0a0"></div>
<div class="a" style="left:22px;top:618px;width:314px;height:15px;background:#fff"></div>
<div class="a" style="left:21px;top:618px;width:1px;height:15px;background:#a0a0a0"></div>
<div class="a" style="left:22px;top:633px;width:314px;height:1px;background:#e4e4e4"></div>
<div class="a" style="left:134px;top:618px;width:1px;height:15px;background:#e4e4e4"></div>
<div class="t" style="left:36.7px;top:621.70px;font-size:10.4px;">SaveAsTemplate</div>
<div class="a" style="left:22px;top:634px;width:314px;height:15px;background:#fff"></div>
<div class="a" style="left:21px;top:634px;width:1px;height:15px;background:#a0a0a0"></div>
<div class="a" style="left:5px;top:649px;width:331px;height:1px;background:#a0a0a0"></div>
<div class="a" style="left:134px;top:634px;width:1px;height:15px;background:#e4e4e4"></div>
<div class="t" style="left:36.7px;top:637.70px;font-size:10.4px;">Template</div>
<div class="t" style="left:135px;top:637.70px;font-size:10.4px;">(TppReportTemplate)</div>
<div class="a" style="left:5px;top:650px;width:331px;height:300px;background:#fff"></div>
<svg style="left:0;top:0" width="1" height="1"><rect x="8.5" y="397.5" width="8" height="8" fill="#fff" stroke="#101010" stroke-width="1.2"/><rect x="10.5" y="401" width="4" height="1.2" fill="#101010"/><rect x="24.5" y="429.5" width="8" height="8" fill="#fff" stroke="#202020"/><rect x="26.5" y="433" width="4" height="1" fill="#202020"/><rect x="28" y="431.5" width="1" height="4" fill="#202020"/><rect x="8.5" y="445.5" width="8" height="8" fill="#fff" stroke="#101010" stroke-width="1.2"/><rect x="10.5" y="449" width="4" height="1.2" fill="#101010"/><path d="M137.5 471 V460.5 H148" fill="none" stroke="#111" stroke-width="1.6"/><rect x="8.5" y="509.5" width="8" height="8" fill="#fff" stroke="#101010" stroke-width="1.2"/><rect x="10.5" y="513" width="4" height="1.2" fill="#101010"/><rect x="24.5" y="573.5" width="8" height="8" fill="#fff" stroke="#202020"/><rect x="26.5" y="577" width="4" height="1" fill="#202020"/><rect x="28" y="575.5" width="1" height="4" fill="#202020"/><rect x="8.5" y="605.5" width="8" height="8" fill="#fff" stroke="#101010" stroke-width="1.2"/><rect x="10.5" y="609" width="4" height="1.2" fill="#101010"/><path d="M137.5 631 V620.5 H148" fill="none" stroke="#111" stroke-width="1.6"/><rect x="24.5" y="637.5" width="8" height="8" fill="#fff" stroke="#202020"/><rect x="26.5" y="641" width="4" height="1" fill="#202020"/><rect x="28" y="639.5" width="1" height="4" fill="#202020"/></svg>
<div class="a" style="left:360px;top:132px;width:914px;height:15px;background:#fff"></div>
<div class="a" style="left:343px;top:149px;width:13px;height:27px;background:#fff"></div>
<div class="a" style="left:343px;top:192px;width:13px;height:716px;background:#fff"></div>
<svg style="left:0;top:0" width="1" height="1"><rect x="343.5" y="133.5" width="11" height="13" fill="#fff" stroke="#303860"/><rect x="344" y="134" width="10" height="2.5" fill="#3a78c8"/><rect x="346" y="137" width="1" height="9" fill="#303860"/><rect x="348" y="138" width="5" height="1" fill="#3a58c0"/><rect x="348" y="140" width="5" height="1" fill="#3a58c0"/><rect x="348" y="142" width="5" height="1" fill="#3a58c0"/><rect x="348" y="144" width="5" height="1" fill="#3a58c0"/><rect x="361" y="133" width="1" height="3" fill="#000"/><rect x="373" y="133" width="1" height="3" fill="#000"/><rect x="385" y="133" width="1" height="14" fill="#000"/><rect x="389" y="139" width="1" height="1" fill="#000"/><rect x="390" y="139" width="1" height="1" fill="#000"/><rect x="388" y="140" width="1" height="1" fill="#000"/><rect x="391" y="140" width="1" height="1" fill="#000"/><rect x="388" y="141" width="1" height="1" fill="#000"/><rect x="391" y="141" width="1" height="1" fill="#000"/><rect x="388" y="142" width="1" height="1" fill="#000"/><rect x="391" y="142" width="1" height="1" fill="#000"/><rect x="388" y="143" width="1" height="1" fill="#000"/><rect x="391" y="143" width="1" height="1" fill="#000"/><rect x="389" y="144" width="1" height="1" fill="#000"/><rect x="390" y="144" width="1" height="1" fill="#000"/><rect x="397" y="133" width="1" height="3" fill="#000"/><rect x="409" y="133" width="1" height="3" fill="#000"/><rect x="421" y="133" width="1" height="3" fill="#000"/><rect x="433" y="133" width="1" height="6" fill="#000"/><rect x="445" y="133" width="1" height="3" fill="#000"/><rect x="457" y="133" width="1" height="3" fill="#000"/><rect x="469" y="133" width="1" height="3" fill="#000"/><rect x="481" y="133" width="1" height="14" fill="#000"/><rect x="485" y="139" width="1" height="1" fill="#000"/><rect x="484" y="140" width="1" height="1" fill="#000"/><rect x="485" y="140" width="1" height="1" fill="#000"/><rect x="485" y="141" width="1" height="1" fill="#000"/><rect x="485" y="142" width="1" height="1" fill="#000"/><rect x="485" y="143" width="1" height="1" fill="#000"/><rect x="485" y="144" width="1" height="1" fill="#000"/><rect x="493" y="133" width="1" height="3" fill="#000"/><rect x="505" y="133" width="1" height="3" fill="#000"/><rect x="517" y="133" width="1" height="3" fill="#000"/><rect x="529" y="133" width="1" height="6" fill="#000"/><rect x="541" y="133" width="1" height="3" fill="#000"/><rect x="553" y="133" width="1" height="3" fill="#000"/><rect x="565" y="133" width="1" height="3" fill="#000"/><rect x="577" y="133" width="1" height="14" fill="#000"/><rect x="581" y="139" width="1" height="1" fill="#000"/><rect x="582" y="139" width="1" height="1" fill="#000"/><rect x="580" y="140" width="1" height="1" fill="#000"/><rect x="583" y="140" width="1" height="1" fill="#000"/><rect x="583" y="141" width="1" height="1" fill="#000"/><rect x="581" y="142" width="1" height="1" fill="#000"/><rect x="582" y="142" width="1" height="1" fill="#000"/><rect x="580" y="143" width="1" height="1" fill="#000"/><rect x="580" y="144" width="1" height="1" fill="#000"/><rect x="581" y="144" width="1" height="1" fill="#000"/><rect x="582" y="144" width="1" height="1" fill="#000"/><rect x="583" y="144" width="1" height="1" fill="#000"/><rect x="589" y="133" width="1" height="3" fill="#000"/><rect x="601" y="133" width="1" height="3" fill="#000"/><rect x="613" y="133" width="1" height="3" fill="#000"/><rect x="625" y="133" width="1" height="6" fill="#000"/><rect x="637" y="133" width="1" height="3" fill="#000"/><rect x="649" y="133" width="1" height="3" fill="#000"/><rect x="661" y="133" width="1" height="3" fill="#000"/><rect x="673" y="133" width="1" height="14" fill="#000"/><rect x="676" y="139" width="1" height="1" fill="#000"/><rect x="677" y="139" width="1" height="1" fill="#000"/><rect x="678" y="139" width="1" height="1" fill="#000"/><rect x="679" y="140" width="1" height="1" fill="#000"/><rect x="677" y="141" width="1" height="1" fill="#000"/><rect x="678" y="141" width="1" height="1" fill="#000"/><rect x="679" y="142" width="1" height="1" fill="#000"/><rect x="679" y="143" width="1" height="1" fill="#000"/><rect x="676" y="144" width="1" height="1" fill="#000"/><rect x="677" y="144" width="1" height="1" fill="#000"/><rect x="678" y="144" width="1" height="1" fill="#000"/><rect x="685" y="133" width="1" height="3" fill="#000"/><rect x="697" y="133" width="1" height="3" fill="#000"/><rect x="709" y="133" width="1" height="3" fill="#000"/><rect x="721" y="133" width="1" height="6" fill="#000"/><rect x="733" y="133" width="1" height="3" fill="#000"/><rect x="745" y="133" width="1" height="3" fill="#000"/><rect x="757" y="133" width="1" height="3" fill="#000"/><rect x="769" y="133" width="1" height="14" fill="#000"/><rect x="774" y="139" width="1" height="1" fill="#000"/><rect x="773" y="140" width="1" height="1" fill="#000"/><rect x="774" y="140" width="1" height="1" fill="#000"/><rect x="772" y="141" width="1" height="1" fill="#000"/><rect x="774" y="141" width="1" height="1" fill="#000"/><rect x="772" y="142" width="1" height="1" fill="#000"/><rect x="773" y="142" width="1" height="1" fill="#000"/><rect x="774" y="142" width="1" height="1" fill="#000"/><rect x="775" y="142" width="1" height="1" fill="#000"/><rect x="774" y="143" width="1" height="1" fill="#000"/><rect x="774" y="144" width="1" height="1" fill="#000"/><rect x="781" y="133" width="1" height="3" fill="#000"/><rect x="793" y="133" width="1" height="3" fill="#000"/><rect x="805" y="133" width="1" height="3" fill="#000"/><rect x="817" y="133" width="1" height="6" fill="#000"/><rect x="829" y="133" width="1" height="3" fill="#000"/><rect x="841" y="133" width="1" height="3" fill="#000"/><rect x="853" y="133" width="1" height="3" fill="#000"/><rect x="865" y="133" width="1" height="14" fill="#000"/><rect x="868" y="139" width="1" height="1" fill="#000"/><rect x="869" y="139" width="1" height="1" fill="#000"/><rect x="870" y="139" width="1" height="1" fill="#000"/><rect x="871" y="139" width="1" height="1" fill="#000"/><rect x="868" y="140" width="1" height="1" fill="#000"/><rect x="868" y="141" width="1" height="1" fill="#000"/><rect x="869" y="141" width="1" height="1" fill="#000"/><rect x="870" y="141" width="1" height="1" fill="#000"/><rect x="871" y="142" width="1" height="1" fill="#000"/><rect x="871" y="143" width="1" height="1" fill="#000"/><rect x="868" y="144" width="1" height="1" fill="#000"/><rect x="869" y="144" width="1" height="1" fill="#000"/><rect x="870" y="144" width="1" height="1" fill="#000"/><rect x="877" y="133" width="1" height="3" fill="#000"/><rect x="889" y="133" width="1" height="3" fill="#000"/><rect x="901" y="133" width="1" height="3" fill="#000"/><rect x="913" y="133" width="1" height="6" fill="#000"/><rect x="925" y="133" width="1" height="3" fill="#000"/><rect x="937" y="133" width="1" height="3" fill="#000"/><rect x="949" y="133" width="1" height="3" fill="#000"/><rect x="961" y="133" width="1" height="14" fill="#000"/><rect x="965" y="139" width="1" height="1" fill="#000"/><rect x="966" y="139" width="1" height="1" fill="#000"/><rect x="964" y="140" width="1" height="1" fill="#000"/><rect x="964" y="141" width="1" height="1" fill="#000"/><rect x="965" y="141" width="1" height="1" fill="#000"/><rect x="966" y="141" width="1" height="1" fill="#000"/><rect x="964" y="142" width="1" height="1" fill="#000"/><rect x="967" y="142" width="1" height="1" fill="#000"/><rect x="964" y="143" width="1" height="1" fill="#000"/><rect x="967" y="143" width="1" height="1" fill="#000"/><rect x="965" y="144" width="1" height="1" fill="#000"/><rect x="966" y="144" width="1" height="1" fill="#000"/><rect x="973" y="133" width="1" height="3" fill="#000"/><rect x="985" y="133" width="1" height="3" fill="#000"/><rect x="997" y="133" width="1" height="3" fill="#000"/><rect x="1009" y="133" width="1" height="6" fill="#000"/><rect x="1021" y="133" width="1" height="3" fill="#000"/><rect x="1033" y="133" width="1" height="3" fill="#000"/><rect x="1045" y="133" width="1" height="3" fill="#000"/><rect x="1057" y="133" width="1" height="14" fill="#000"/><rect x="1060" y="139" width="1" height="1" fill="#000"/><rect x="1061" y="139" width="1" height="1" fill="#000"/><rect x="1062" y="139" width="1" height="1" fill="#000"/><rect x="1063" y="139" width="1" height="1" fill="#000"/><rect x="1063" y="140" width="1" height="1" fill="#000"/><rect x="1062" y="141" width="1" height="1" fill="#000"/><rect x="1062" y="142" width="1" height="1" fill="#000"/><rect x="1061" y="143" width="1" height="1" fill="#000"/><rect x="1061" y="144" width="1" height="1" fill="#000"/><rect x="1069" y="133" width="1" height="3" fill="#000"/><rect x="1081" y="133" width="1" height="3" fill="#000"/><rect x="1093" y="133" width="1" height="3" fill="#000"/><rect x="1105" y="133" width="1" height="6" fill="#000"/><rect x="1117" y="133" width="1" height="3" fill="#000"/><rect x="1129" y="133" width="1" height="3" fill="#000"/><rect x="1141" y="133" width="1" height="3" fill="#000"/><rect x="1153" y="133" width="1" height="14" fill="#000"/><rect x="1157" y="139" width="1" height="1" fill="#000"/><rect x="1158" y="139" width="1" height="1" fill="#000"/><rect x="1156" y="140" width="1" height="1" fill="#000"/><rect x="1159" y="140" width="1" height="1" fill="#000"/><rect x="1157" y="141" width="1" height="1" fill="#000"/><rect x="1158" y="141" width="1" height="1" fill="#000"/><rect x="1156" y="142" width="1" height="1" fill="#000"/><rect x="1159" y="142" width="1" height="1" fill="#000"/><rect x="1156" y="143" width="1" height="1" fill="#000"/><rect x="1159" y="143" width="1" height="1" fill="#000"/><rect x="1157" y="144" width="1" height="1" fill="#000"/><rect x="1158" y="144" width="1" height="1" fill="#000"/><rect x="1165" y="133" width="1" height="3" fill="#000"/><rect x="1177" y="133" width="1" height="3" fill="#000"/><rect x="1189" y="133" width="1" height="3" fill="#000"/><rect x="1201" y="133" width="1" height="6" fill="#000"/><rect x="1213" y="133" width="1" height="3" fill="#000"/><rect x="1225" y="133" width="1" height="3" fill="#000"/><rect x="1237" y="133" width="1" height="3" fill="#000"/><rect x="1249" y="133" width="1" height="14" fill="#000"/><rect x="1253" y="139" width="1" height="1" fill="#000"/><rect x="1254" y="139" width="1" height="1" fill="#000"/><rect x="1252" y="140" width="1" height="1" fill="#000"/><rect x="1255" y="140" width="1" height="1" fill="#000"/><rect x="1252" y="141" width="1" height="1" fill="#000"/><rect x="1255" y="141" width="1" height="1" fill="#000"/><rect x="1253" y="142" width="1" height="1" fill="#000"/><rect x="1254" y="142" width="1" height="1" fill="#000"/><rect x="1255" y="142" width="1" height="1" fill="#000"/><rect x="1255" y="143" width="1" height="1" fill="#000"/><rect x="1253" y="144" width="1" height="1" fill="#000"/><rect x="1254" y="144" width="1" height="1" fill="#000"/><rect x="1261" y="133" width="1" height="3" fill="#000"/><rect x="1273" y="133" width="1" height="3" fill="#000"/><rect x="343" y="152" width="3" height="1" fill="#000"/><rect x="343" y="164" width="3" height="1" fill="#000"/><rect x="343" y="204" width="3" height="1" fill="#000"/><rect x="343" y="216" width="3" height="1" fill="#000"/><rect x="343" y="228" width="3" height="1" fill="#000"/><rect x="343" y="240" width="6" height="1" fill="#000"/><rect x="343" y="252" width="3" height="1" fill="#000"/><rect x="343" y="264" width="3" height="1" fill="#000"/><rect x="343" y="276" width="3" height="1" fill="#000"/><rect x="343" y="288" width="13" height="1" fill="#000"/><rect x="351" y="292" width="1" height="1" fill="#000"/><rect x="350" y="293" width="1" height="1" fill="#000"/><rect x="351" y="293" width="1" height="1" fill="#000"/><rect x="351" y="294" width="1" height="1" fill="#000"/><rect x="351" y="295" width="1" height="1" fill="#000"/><rect x="351" y="296" width="1" height="1" fill="#000"/><rect x="351" y="297" width="1" height="1" fill="#000"/><rect x="343" y="300" width="3" height="1" fill="#000"/><rect x="343" y="312" width="3" height="1" fill="#000"/><rect x="343" y="324" width="3" height="1" fill="#000"/><rect x="343" y="336" width="6" height="1" fill="#000"/><rect x="343" y="348" width="3" height="1" fill="#000"/><rect x="343" y="360" width="3" height="1" fill="#000"/><rect x="343" y="372" width="3" height="1" fill="#000"/><rect x="343" y="384" width="13" height="1" fill="#000"/><rect x="351" y="388" width="1" height="1" fill="#000"/><rect x="352" y="388" width="1" height="1" fill="#000"/><rect x="350" y="389" width="1" height="1" fill="#000"/><rect x="353" y="389" width="1" height="1" fill="#000"/><rect x="353" y="390" width="1" height="1" fill="#000"/><rect x="351" y="391" width="1" height="1" fill="#000"/><rect x="352" y="391" width="1" height="1" fill="#000"/><rect x="350" y="392" width="1" height="1" fill="#000"/><rect x="350" y="393" width="1" height="1" fill="#000"/><rect x="351" y="393" width="1" height="1" fill="#000"/><rect x="352" y="393" width="1" height="1" fill="#000"/><rect x="353" y="393" width="1" height="1" fill="#000"/><rect x="343" y="396" width="3" height="1" fill="#000"/><rect x="343" y="408" width="3" height="1" fill="#000"/><rect x="343" y="420" width="3" height="1" fill="#000"/><rect x="343" y="432" width="6" height="1" fill="#000"/><rect x="343" y="444" width="3" height="1" fill="#000"/><rect x="343" y="456" width="3" height="1" fill="#000"/><rect x="343" y="468" width="3" height="1" fill="#000"/><rect x="343" y="480" width="13" height="1" fill="#000"/><rect x="350" y="484" width="1" height="1" fill="#000"/><rect x="351" y="484" width="1" height="1" fill="#000"/><rect x="352" y="484" width="1" height="1" fill="#000"/><rect x="353" y="485" width="1" height="1" fill="#000"/><rect x="351" y="486" width="1" height="1" fill="#000"/><rect x="352" y="486" width="1" height="1" fill="#000"/><rect x="353" y="487" width="1" height="1" fill="#000"/><rect x="353" y="488" width="1" height="1" fill="#000"/><rect x="350" y="489" width="1" height="1" fill="#000"/><rect x="351" y="489" width="1" height="1" fill="#000"/><rect x="352" y="489" width="1" height="1" fill="#000"/><rect x="343" y="492" width="3" height="1" fill="#000"/><rect x="343" y="504" width="3" height="1" fill="#000"/><rect x="343" y="516" width="3" height="1" fill="#000"/><rect x="343" y="528" width="6" height="1" fill="#000"/><rect x="343" y="540" width="3" height="1" fill="#000"/><rect x="343" y="552" width="3" height="1" fill="#000"/><rect x="343" y="564" width="3" height="1" fill="#000"/><rect x="343" y="576" width="13" height="1" fill="#000"/><rect x="352" y="580" width="1" height="1" fill="#000"/><rect x="351" y="581" width="1" height="1" fill="#000"/><rect x="352" y="581" width="1" height="1" fill="#000"/><rect x="350" y="582" width="1" height="1" fill="#000"/><rect x="352" y="582" width="1" height="1" fill="#000"/><rect x="350" y="583" width="1" height="1" fill="#000"/><rect x="351" y="583" width="1" height="1" fill="#000"/><rect x="352" y="583" width="1" height="1" fill="#000"/><rect x="353" y="583" width="1" height="1" fill="#000"/><rect x="352" y="584" width="1" height="1" fill="#000"/><rect x="352" y="585" width="1" height="1" fill="#000"/><rect x="343" y="588" width="3" height="1" fill="#000"/><rect x="343" y="600" width="3" height="1" fill="#000"/><rect x="343" y="612" width="3" height="1" fill="#000"/><rect x="343" y="624" width="6" height="1" fill="#000"/><rect x="343" y="636" width="3" height="1" fill="#000"/><rect x="343" y="648" width="3" height="1" fill="#000"/><rect x="343" y="660" width="3" height="1" fill="#000"/><rect x="343" y="672" width="13" height="1" fill="#000"/><rect x="350" y="676" width="1" height="1" fill="#000"/><rect x="351" y="676" width="1" height="1" fill="#000"/><rect x="352" y="676" width="1" height="1" fill="#000"/><rect x="353" y="676" width="1" height="1" fill="#000"/><rect x="350" y="677" width="1" height="1" fill="#000"/><rect x="350" y="678" width="1" height="1" fill="#000"/><rect x="351" y="678" width="1" height="1" fill="#000"/><rect x="352" y="678" width="1" height="1" fill="#000"/><rect x="353" y="679" width="1" height="1" fill="#000"/><rect x="353" y="680" width="1" height="1" fill="#000"/><rect x="350" y="681" width="1" height="1" fill="#000"/><rect x="351" y="681" width="1" height="1" fill="#000"/><rect x="352" y="681" width="1" height="1" fill="#000"/><rect x="343" y="684" width="3" height="1" fill="#000"/><rect x="343" y="696" width="3" height="1" fill="#000"/><rect x="343" y="708" width="3" height="1" fill="#000"/><rect x="343" y="720" width="6" height="1" fill="#000"/><rect x="343" y="732" width="3" height="1" fill="#000"/><rect x="343" y="744" width="3" height="1" fill="#000"/><rect x="343" y="756" width="3" height="1" fill="#000"/><rect x="343" y="768" width="13" height="1" fill="#000"/><rect x="351" y="772" width="1" height="1" fill="#000"/><rect x="352" y="772" width="1" height="1" fill="#000"/><rect x="350" y="773" width="1" height="1" fill="#000"/><rect x="350" y="774" width="1" height="1" fill="#000"/><rect x="351" y="774" width="1" height="1" fill="#000"/><rect x="352" y="774" width="1" height="1" fill="#000"/><rect x="350" y="775" width="1" height="1" fill="#000"/><rect x="353" y="775" width="1" height="1" fill="#000"/><rect x="350" y="776" width="1" height="1" fill="#000"/><rect x="353" y="776" width="1" height="1" fill="#000"/><rect x="351" y="777" width="1" height="1" fill="#000"/><rect x="352" y="777" width="1" height="1" fill="#000"/><rect x="343" y="780" width="3" height="1" fill="#000"/><rect x="343" y="792" width="3" height="1" fill="#000"/><rect x="343" y="804" width="3" height="1" fill="#000"/><rect x="343" y="816" width="6" height="1" fill="#000"/><rect x="343" y="828" width="3" height="1" fill="#000"/><rect x="343" y="840" width="3" height="1" fill="#000"/><rect x="343" y="852" width="3" height="1" fill="#000"/><rect x="343" y="864" width="13" height="1" fill="#000"/><rect x="350" y="868" width="1" height="1" fill="#000"/><rect x="351" y="868" width="1" height="1" fill="#000"/><rect x="352" y="868" width="1" height="1" fill="#000"/><rect x="353" y="868" width="1" height="1" fill="#000"/><rect x="353" y="869" width="1" height="1" fill="#000"/><rect x="352" y="870" width="1" height="1" fill="#000"/><rect x="352" y="871" width="1" height="1" fill="#000"/><rect x="351" y="872" width="1" height="1" fill="#000"/><rect x="351" y="873" width="1" height="1" fill="#000"/><rect x="343" y="876" width="3" height="1" fill="#000"/><rect x="343" y="888" width="3" height="1" fill="#000"/><rect x="343" y="900" width="3" height="1" fill="#000"/><rect x="351" y="196" width="1" height="1" fill="#000"/><rect x="352" y="196" width="1" height="1" fill="#000"/><rect x="350" y="197" width="1" height="1" fill="#000"/><rect x="353" y="197" width="1" height="1" fill="#000"/><rect x="350" y="198" width="1" height="1" fill="#000"/><rect x="353" y="198" width="1" height="1" fill="#000"/><rect x="350" y="199" width="1" height="1" fill="#000"/><rect x="353" y="199" width="1" height="1" fill="#000"/><rect x="350" y="200" width="1" height="1" fill="#000"/><rect x="353" y="200" width="1" height="1" fill="#000"/><rect x="351" y="201" width="1" height="1" fill="#000"/><rect x="352" y="201" width="1" height="1" fill="#000"/></svg>
<div class="a" style="left:361px;top:152px;width:817px;height:756px;background:#fff"></div>
<div class="a" style="left:1178px;top:152px;width:82px;height:761px;background:#a0a0a0"></div>
<div class="a" style="left:342px;top:176px;width:836px;height:16px;background:#efefef"></div>
<div class="t" style="left:380px;top:179.29px;font-size:11px;">Título</div>
<svg style="left:0;top:0" width="1" height="1"><path d="M368 186.5 L371 183.5 L374 186.5" fill="none" stroke="#202020" stroke-width="1.2"/></svg>
<svg style="left:0;top:0" width="1280" height="976"><defs><pattern id="dots" x="393" y="217" width="8" height="8" patternUnits="userSpaceOnUse"><rect x="0" y="0" width="1" height="1" fill="#8a8a8a"/></pattern></defs><rect x="386" y="211" width="768" height="697" fill="url(#dots)"/><rect x="385.5" y="192.5" width="768" height="18" fill="none" stroke="#777" stroke-dasharray="3 3"/><rect x="385" y="210" width="1" height="698" fill="#5b7fc7"/><rect x="1154" y="193" width="1" height="715" fill="#5b7fc7"/><rect x="450" y="241" width="384" height="384" fill="#fff"/><circle cx="642" cy="433" r="191" fill="#ff0000" shape-rendering="crispEdges"/><path d="M450 241.5 H834" stroke="#707070" stroke-dasharray="3 3" fill="none"/><path d="M450 624.5 H834" stroke="#707070" stroke-dasharray="3 3" fill="none"/><path d="M450.5 241 V625" stroke="#707070" stroke-dasharray="3 3" fill="none"/><path d="M833.5 241 V625" stroke="#707070" stroke-dasharray="3 3" fill="none"/><rect x="724" y="258" width="384" height="384" fill="#fff"/><circle cx="916" cy="450" r="191" fill="#ffff00" shape-rendering="crispEdges"/><path d="M724 258.5 H1108" stroke="#707070" stroke-dasharray="3 3" fill="none"/><path d="M724 641.5 H1108" stroke="#707070" stroke-dasharray="3 3" fill="none"/><path d="M724.5 258 V642" stroke="#707070" stroke-dasharray="3 3" fill="none"/><path d="M1107.5 258 V642" stroke="#707070" stroke-dasharray="3 3" fill="none"/><rect x="573" y="471" width="384" height="384" fill="#fff"/><circle cx="765" cy="663" r="191" fill="#00ffff" shape-rendering="crispEdges"/><path d="M573 471.5 H957" stroke="#707070" stroke-dasharray="3 3" fill="none"/><path d="M573 854.5 H957" stroke="#707070" stroke-dasharray="3 3" fill="none"/><path d="M573.5 471 V855" stroke="#707070" stroke-dasharray="3 3" fill="none"/><path d="M956.5 471 V855" stroke="#707070" stroke-dasharray="3 3" fill="none"/><rect x="390" y="508" width="288" height="288" fill="#fff"/><circle cx="534" cy="652" r="143" fill="#c8c8c8" shape-rendering="crispEdges"/><path d="M390 508.5 H678" stroke="#707070" stroke-dasharray="3 3" fill="none"/><path d="M390 795.5 H678" stroke="#707070" stroke-dasharray="3 3" fill="none"/><path d="M390.5 508 V796" stroke="#707070" stroke-dasharray="3 3" fill="none"/><path d="M677.5 508 V796" stroke="#707070" stroke-dasharray="3 3" fill="none"/></svg>
<div class="t" style="left:385px;top:193.87px;font-size:11.5px;">sbrTexto: CMC_Detalle</div>
<div class="a" style="left:1268px;top:169px;width:2px;height:609px;background:#858585"></div>
<div class="a" style="left:342px;top:908px;width:836px;height:5px;background:#efefef"></div>
<div class="a" style="left:342px;top:908px;width:836px;height:5px;overflow:hidden"><svg style="left:-342px;top:-908px" width="1" height="1"><path d="M368 917 L371 914 L374 917" fill="none" stroke="#333" stroke-width="1"/></svg><div class="t" style="left:38px;top:1.6px;font-size:11px">Detalle</div></div>
<div class="a" style="left:361px;top:913px;width:817px;height:1px;background:#fff"></div>
<div class="a" style="left:378px;top:921px;width:852px;height:2px;background:#858585"></div>
<div class="a" style="left:337px;top:930px;width:943px;height:20px;background:#fff"></div>
<svg style="left:0;top:0" width="1280" height="976"><path d="M346 930.5 H1277" stroke="#a8a8a8"/><path d="M345.5 930.5 L350.5 948.5 H474.5 L476.5 940 L474.5 930.5" fill="#fff" stroke="#8a8a8a"/><path d="M476.5 930.5 L481 948.5 H597.5 L600 930.5" fill="#fff" stroke="#8a8a8a"/><path d="M600.5 930.5 L603 948.5 H726 L729 930.5" fill="#fff" stroke="#8a8a8a"/></svg>
<div class="t" style="left:352.5px;top:934.02px;font-size:11.5px;">Principal: CMC_Detalle</div>
<div class="t" style="left:482px;top:934.02px;font-size:11.5px;">sbrUno: CMC_Detalle</div>
<div class="t" style="left:604px;top:934.02px;font-size:11.5px;">sbrTexto: CMC_Detalle</div>
<div class="t" style="left:0.5px;top:961.11px;font-size:10.5px;">Listo.</div>
<div class="a" style="left:705px;top:956px;width:1px;height:20px;background:#a8a8a8"></div>
<div class="a" style="left:795px;top:956px;width:1px;height:20px;background:#a8a8a8"></div>
<div class="a" style="left:885px;top:956px;width:1px;height:20px;background:#a8a8a8"></div>
<div class="a" style="left:975px;top:956px;width:1px;height:20px;background:#a8a8a8"></div>
<div class="a" style="left:1065px;top:956px;width:1px;height:20px;background:#a8a8a8"></div>
<div class="t" style="left:710.7px;top:960.69px;font-size:11px;">Izquierda: 0</div>
<div class="t" style="left:800.6px;top:960.69px;font-size:11px;">Arriba: 0</div>
<div class="t" style="left:890.5px;top:960.69px;font-size:11px;">Ancho: 0</div>
<div class="t" style="left:980px;top:960.69px;font-size:11px;">Altura: 0</div>
<div class="t" style="left:1071.5px;top:960.69px;font-size:11px;">100%</div>
<div class="a" style="left:1116px;top:962px;width:137px;height:8px;background:#e6e6e6;border:1px solid #d0d0d0"></div>
<svg style="left:0;top:0" width="1" height="1"><path d="M1130.5 961.5 L1134 958.5 L1137.5 961.5 V970 H1130.5 Z" fill="#0078d7"/></svg>
</body></html>
